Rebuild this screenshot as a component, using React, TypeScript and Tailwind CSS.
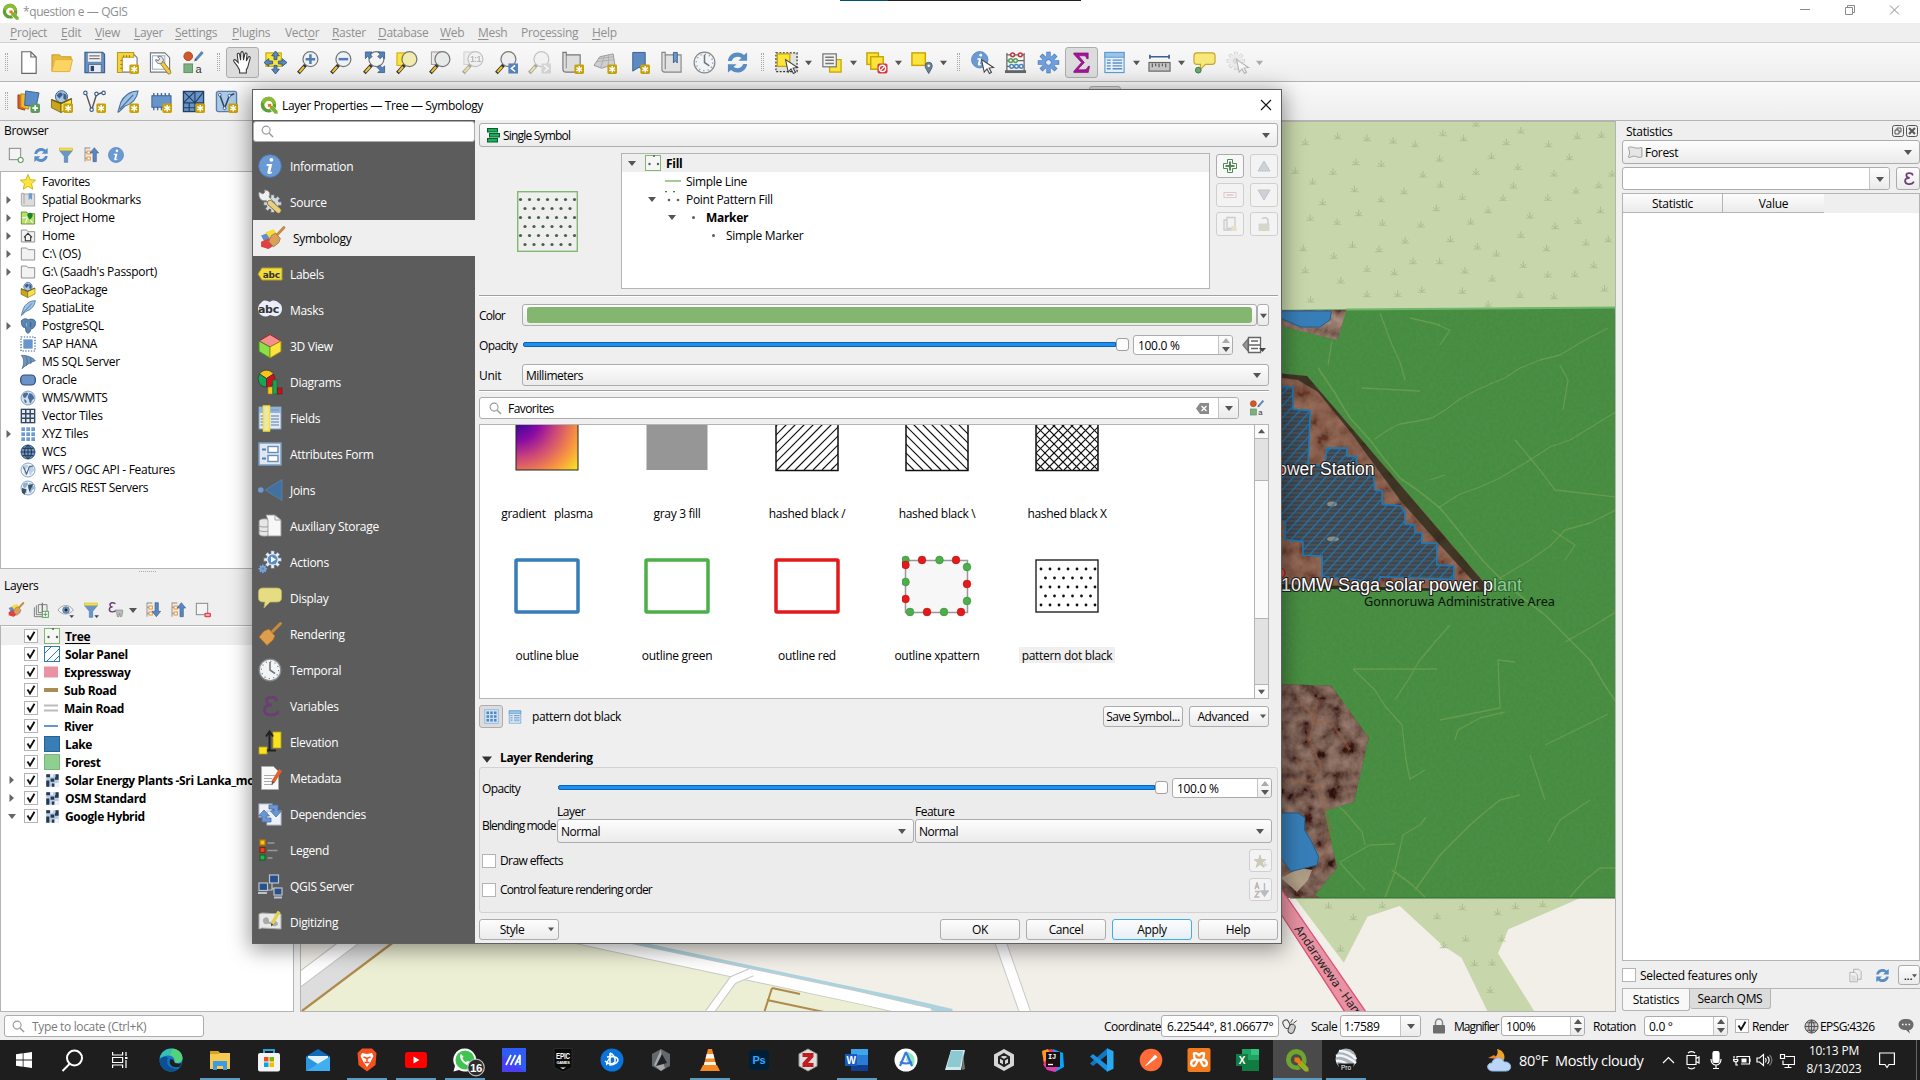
import React from "react";
import type { ReactNode } from "react";

/* ------------------------------------------------------------------ */
/* Icon drawings, all on a 24 x 24 grid                                 */
/* ------------------------------------------------------------------ */
const badge = (
  <g>
    <rect x="14" y="14" width="10" height="10" rx="1.5" fill="#c8a20a" />
    <path d="M19 15.6v6.8M16 17.3l6 3.4M22 17.3l-6 3.4" stroke="#fff" strokeWidth="1.5" />
  </g>
);
const plusBadge = (
  <g>
    <rect x="14" y="14" width="10" height="10" rx="2" fill="#5c9a5f" />
    <path d="M19 16v6M16 19h6" stroke="#fff" strokeWidth="1.8" />
  </g>
);
const mag = (fill = "#e9edf0", op = 1) => (
  <g opacity={op}>
    <path d="M1.500 23L9 14.500" stroke="#333" strokeWidth="3.800" />
    <path d="M2.500 22L7.300 16.500" stroke="#f2c230" strokeWidth="2.200" />
    <circle cx="14" cy="8.500" r="7.800" fill={fill} stroke="#777" strokeWidth="1.300" />
  </g>
);
const page = <path d="M5 .8h9.500l5.500 5.500v17H5z M14.500.8v5.500H20" fill="#fff" stroke="#666" strokeWidth="1.200" />;
const refresh = (
  <g fill="#5a8dc4">
    <path d="M2 10.5C2.5 5 7 1.5 12 1.5c3 0 5 1 6.7 2.6L22 1.5v8.8h-9l3.2-3C13 5 7.500 6 6 10.500z" />
    <path d="M22 13.500C21.500 19 17 22.500 12 22.500c-3 0-5-1-6.700-2.600L2 22.500v-8.800h9l-3.200 3c3.200 2.300 8.700 1.300 10.200-3.200z" />
  </g>
);
const brush = (
  <g>
    <path d="M1 9l11-4 6 11-10 6z" fill="#5b8fd0" />
    <path d="M5 6l8-3 4 5-6 6z" fill="#f6dc3c" />
    <path d="M1 15l7-3 6 6-6 4-7-2z" fill="#e04040" />
    <path d="M16 9L23 1.500" stroke="#c48a45" strokeWidth="2.800" strokeLinecap="round" />
    <path d="M11 9l4-2 4.500 5-1.500 4-5 4-4.500-5z" fill="#d9a05c" stroke="#a87335" strokeWidth=".8" />
  </g>
);
const funnel = (
  <g>
    <path d="M2 5h20l-7.500 9v9h-5v-9z" fill="#6a95c9" stroke="#4c7bb0" />
    <rect x="2" y="1.500" width="20" height="4" fill="#f3df4a" stroke="#c9b030" strokeWidth=".7" />
  </g>
);
const globe = (land: string, water = "#cfe0f0") => (
  <g>
    <circle cx="12" cy="12" r="10.500" fill={water} stroke="#6c8fb5" strokeWidth="1.200" />
    <path d="M4 7c3-4 7-4 8-2s-2 4-3 6-3 1-4 0zM14 5c4 0 6 3 7 6s-3 3-4 7-3 1-3-2-3-3-2-6 1-4 2-5zM6 14c2 0 4 2 4 4s-2 2-3 0z" fill={land} />
  </g>
);
const info = (
  <g>
    <circle cx="12" cy="12" r="11.300" fill="#6a9ad4" stroke="#4e7db8" />
    <circle cx="13.400" cy="5.800" r="1.900" fill="#fff" />
    <path d="M8.800 10h5.400l-2 8.200 2-.7-.5 1.800c-2.600 1.300-4.900.8-4.200-1.800l1.300-5.500-2.300-.3z" fill="#fff" />
  </g>
);
const gear = (fill: string, stroke: string, inner = "#f4f4f4") => (
  <g>
    <path d="M12 .8v22.400M.8 12h22.400M4.200 4.200l15.600 15.600M19.800 4.200L4.200 19.800" stroke={stroke} strokeWidth="4.500" />
    <path d="M12 1.600v20.800M1.600 12h20.800M4.700 4.700l14.600 14.600M19.300 4.700L4.700 19.300" stroke={fill} strokeWidth="3" />
    <circle cx="12" cy="12" r="7.500" fill={fill} />
    <circle cx="12" cy="12" r="3" fill={inner} stroke={stroke} />
  </g>
);
const tableIcon = (
  <g>
    <rect x="2" y="1.500" width="20" height="21" fill="#e7f0fa" stroke="#5b9bd0" strokeWidth="1.200" />
    <rect x="2" y="1.500" width="20" height="5" fill="#9cc3e6" stroke="#5b9bd0" />
    <path d="M4 9.500h4M4 12.500h4M4 15.500h4M4 18.500h4M10 9.500h10M10 12.500h10M10 15.500h10M10 18.500h10" stroke="#5b8fc4" strokeWidth="1.400" />
  </g>
);
const clock = (
  <g>
    <circle cx="12" cy="12" r="10.800" fill="#f3f4f6" stroke="#888" strokeWidth="1.300" />
    <circle cx="12" cy="12" r="8.600" fill="none" stroke="#5d87b8" strokeWidth="1.200" strokeDasharray="1.200 3.300" />
    <path d="M12 4v8l5 3.500" fill="none" stroke="#777" strokeWidth="1.600" />
  </g>
);
const feather = (
  <path d="M2 23L5 13C8 6 15 1 23 1 22 8 18 14 9 17L3 23z M4 20L18 5" fill="#9cc3e8" stroke="#4a6f96" strokeWidth="1.200" />
);
const box = (
  <g>
    <path d="M1.500 10l10 4v9.500l-10-5z" fill="#c9a51a" stroke="#6a5a1a" strokeWidth=".8" />
    <path d="M11.500 14l11-5v9l-11 5.500z" fill="#f7e04a" stroke="#6a5a1a" strokeWidth=".8" />
    <circle cx="12" cy="7" r="6.300" fill="#a9c6e4" stroke="#3d5c80" />
    <path d="M7 6c2-4 5-4 6-2s-2 3-3 5zM14 3c3 1 4 3 3 6s-4 0-3-2z" fill="#3f5f88" />
    <path d="M1.500 10l10 4 11-5" fill="none" stroke="#6a5a1a" strokeWidth="1.400" />
  </g>
);
const folder = <path d="M2 3h8l2 2.500h10V21H2z" fill="#f2f2f2" stroke="#8a8a8a" strokeWidth="1.400" />;
const selArrow = <path d="M11 9l2.800 13 2.900-3.200 2.500 4.700 2.200-1.200-2.500-4.500 4.600-.6z" fill="#fff" stroke="#444" strokeWidth="1.100" />;
const expandTree = (up: boolean) => (
  <g>
    <path d="M3 1v21M3 8h5M3 17h5" stroke="#888" strokeWidth="1.300" fill="none" />
    <path d="M3 1.500h8" stroke="#888" strokeWidth="1.500" />
    <rect x="6" y="6" width="5" height="4.500" fill="#fff" stroke="#f29030" strokeWidth="1.500" />
    <rect x="6" y="15" width="5" height="4.500" fill="#fff" stroke="#f29030" strokeWidth="1.500" />
    <path d={up ? "M17 1l6.500 8h-3.500v13h-5V9h-4.500z" : "M17 22l6.500-8h-3.500V1h-5v13h-4.500z"} fill="#5a87bd" stroke="#3e6494" />
  </g>
);
const styleIcon = (
  <g>
    <circle cx="6.500" cy="5.500" r="4.500" fill="#d0582c" stroke="#a84420" />
    <path d="M14 9.500l7.500-8.500" stroke="#5b87b9" strokeWidth="3" />
    <path d="M12.500 11l1.500-3 1.500 1.500z" fill="#444" />
    <rect x="2" y="13.500" width="9" height="9" fill="#7cb083" stroke="#5c9163" />
    <text x="14" y="22.500" fontSize="11.500" fill="#333" fontFamily="Liberation Sans, sans-serif">a</text>
  </g>
);
const rasterChecker = (
  <g>
    <rect x="2" y="2" width="20" height="20" fill="#b8cce6" />
    <path d="M2 2h6v5H2zM17 2h5v5h-5zM9 9h6v5H9zM2 12h5v10H2zM16 7h6v4h-6zM11 17h4v5h-4z" fill="#27394f" />
    <path d="M16 16h6v6h-6zM9 2h4v4H9z" fill="#eef3fa" />
  </g>
);
const epsilon = (c: string) => (
  <path d="M18.500 6c-1-3.500-10-4-10 .5 0 3 2.500 4.500 5.500 4.500-5 0-7.500 2-7.500 5 0 6 10.500 6.500 13.500 2" fill="none" stroke={c} strokeWidth="2.800" strokeLinecap="round" />
);

const ICONS: Record<string, ReactNode> = {
  new: page,
  open: (
    <g>
      <path d="M2 21V4h8l2 2h10v4" fill="#e9b93c" stroke="#c99a28" />
      <path d="M2 21.500L5 9h18.500l-3 12.500z" fill="#fcd462" stroke="#e0b040" />
    </g>
  ),
  save: (
    <g>
      <path d="M2 1.500h18.500L22.500 3.500v19H2z" fill="#6290c8" stroke="#3c618f" strokeWidth="1.200" />
      <rect x="5" y="2" width="14" height="9.500" fill="#f4f4f4" stroke="#888" strokeWidth=".6" />
      <path d="M6.500 5h11M6.500 8h11" stroke="#777" strokeWidth="1.300" />
      <rect x="6" y="14" width="13" height="8.500" fill="#e8ecf2" stroke="#47648c" strokeWidth=".8" />
      <rect x="8" y="15.500" width="3.500" height="5.500" fill="#2d4468" />
    </g>
  ),
  newLayout: (
    <g>
      <path d="M6 2h11l5 5v15H6z" fill="#fff" stroke="#777" strokeWidth="1.200" />
      <path d="M1.500 1.500h17v5h-12v16h-5z" fill="#f5d442" stroke="#b99a20" strokeWidth="1.100" />
      <path d="M8 4.500v2M11 4.500v2M14 4.500v2M4.500 10h2M4.500 14h2M4.500 18h2" stroke="#8a7010" />
      {badge}
    </g>
  ),
  layoutMgr: (
    <g>
      <path d="M1.500 2h15l5 5v15h-20z" fill="#fff" stroke="#777" strokeWidth="1.200" />
      <rect x="3.500" y="5" width="13" height="14" fill="none" stroke="#8aa9c9" />
      <path d="M14 13L21 22" stroke="#8a6f20" strokeWidth="4.600" strokeLinecap="round" />
      <path d="M14 13L21 22" stroke="#f0c948" strokeWidth="3.200" strokeLinecap="round" />
      <path d="M9 6c3-1.500 6 .5 6 4l-2 3c-3 1-6-1-6-4l3 1 1-2z" fill="#e8e8e8" stroke="#666" />
    </g>
  ),
  style: styleIcon,
  pan: (
    <path
      d="M6.500 15.500L3 11c-1-2 1-2.500 2-1.500L7.500 12 6.500 4c0-2 2-2 2.500-.5l1 6 .3-7.500c.2-1.800 2.400-1.800 2.500 0l.2 7.500 1.500-6.500c.5-1.500 2.500-1 2.200.5L16 10.500l2-4c.8-1.300 2.500-.5 2 1L18.500 13c-.5 3-1 5-2.500 6.500V23H9v-3z"
      fill="#fff"
      stroke="#333"
      strokeWidth="1.100"
    />
  ),
  panSel: (
    <g>
      <rect x="2" y="2" width="16" height="14" fill="#fbe53c" stroke="#c9a500" strokeWidth="1.200" />
      <path
        d="M12 0l4 5h-2.500v4h-3V5H8zM12 24l4-5h-2.500v-4h-3v4H8zM0 12l5-4v2.500h4v3H5V16zM24 12l-5-4v2.500h-4v3h4V16z"
        fill="#5b87bd"
        stroke="#2f5585"
        strokeWidth=".9"
      />
    </g>
  ),
  zoomIn: (
    <g>
      {mag("#eef2f5")}
      <path d="M14 3.500v10M9 8.500h10" stroke="#4f7db3" strokeWidth="2.600" />
    </g>
  ),
  zoomOut: (
    <g>
      {mag("#eef2f5")}
      <path d="M9 8.500h10" stroke="#4f7db3" strokeWidth="2.600" />
    </g>
  ),
  zoomFull: (
    <g>
      {mag("#f3f3f3")}
      <path
        d="M2.500 1h7l-2.300 2.300 2.300 2.400-2.300 2.300-2.400-2.300L2.500 8zM22.500 1v7l-2.300-2.300-2.400 2.300-2.300-2.300 2.400-2.400L15.500 1zM22.500 22.500h-7l2.300-2.300-3-3 2.500-2.500 3 3 2.200-2.200z"
        fill="#5583ba"
        stroke="#2f5585"
        strokeWidth=".8"
      />
    </g>
  ),
  zoomSel: (
    <g>
      <rect x="1" y="2" width="12" height="13" fill="#fbe53c" stroke="#c9a500" />
      {mag("#f1ebb0")}
    </g>
  ),
  zoomLayer: (
    <g>
      <rect x="2.500" y="1" width="11" height="13" fill="#e9e9e9" stroke="#999" />
      {mag("#e6ebea")}
    </g>
  ),
  zoomNative: (
    <g opacity=".4">
      <rect x="2" y="1" width="11" height="13" fill="#e3e3e3" stroke="#999" />
      {mag("#eee")}
      <text x="8.500" y="12" fontSize="8.500" fontWeight="700" fill="#555" fontFamily="Liberation Sans, sans-serif">1:1</text>
    </g>
  ),
  zoomLast: (
    <g>
      {mag("#eee")}
      <rect x="14" y="13" width="10" height="10.500" fill="#5583ba" />
      <path d="M21 15l-4 3.200 4 3.200" stroke="#fff" strokeWidth="1.600" fill="none" />
    </g>
  ),
  zoomNext: (
    <g opacity=".4">
      {mag("#eee")}
      <rect x="14" y="13" width="10" height="10.500" fill="#aaa" />
      <path d="M17 15l4 3.200-4 3.200" stroke="#fff" strokeWidth="1.600" fill="none" />
    </g>
  ),
  mapView: (
    <g>
      <path d="M2 1.500h3.500v2.500H20v18H5.500C3.500 22 2 20.500 2 19z" fill="#dedede" stroke="#777" strokeWidth="1.200" />
      <path d="M5.500 4v14" stroke="#888" />
      {badge}
    </g>
  ),
  map3d: (
    <g>
      <path d="M0 15L6 6l14-3 2 13H14l-6 2z" fill="#cfcfcf" stroke="#999" />
      <path d="M3 11l18-2M5 8l15-2M11 5l-4 12M15 4v13" stroke="#aaa" strokeWidth=".9" />
      {badge}
    </g>
  ),
  bookmark: (
    <g>
      <path d="M6 1.500h13V21l-6.500-4L6 21z" fill="#5d8bc1" stroke="#3a608f" />
      {badge}
    </g>
  ),
  bookmarks: (
    <g>
      <path d="M2 1.500h3.500V4H22v18H5c-2 0-3-1-3-3z" fill="#e2e2e2" stroke="#888" strokeWidth="1.200" />
      <path d="M5.500 4v15" stroke="#888" strokeWidth="1.200" />
      <path d="M14 1.500h4v11l-2-2.500-2 2.500z" fill="#6d99cf" stroke="#3a608f" />
    </g>
  ),
  clock,
  refresh,
  select: (
    <g>
      <rect x="1" y="2" width="22" height="19.500" fill="#e2e2e2" stroke="#333" strokeWidth="1.300" strokeDasharray="2 1.600" />
      <rect x="2.500" y="3" width="13" height="13" fill="#fbe53c" stroke="#c9a500" strokeWidth="1.300" />
      {selArrow}
    </g>
  ),
  selForm: (
    <g>
      <rect x="10" y="9" width="12" height="13" fill="#fbe53c" stroke="#c9a500" strokeWidth="1.300" />
      <rect x="3" y="3" width="14" height="13.500" fill="#f2f2f2" stroke="#777" strokeWidth="1.300" />
      <path d="M5.500 6.500h9M5.500 9.700h9M5.500 13h9" stroke="#777" strokeWidth="1.600" />
    </g>
  ),
  deselect: (
    <g>
      <rect x="2" y="2" width="12" height="12" fill="#fbe53c" stroke="#c9a500" strokeWidth="1.500" />
      <rect x="6" y="6" width="13" height="13" fill="#fbe53c" stroke="#c9a500" strokeWidth="1.500" />
      <rect x="13" y="13" width="10.500" height="10.500" rx="2" fill="#d9353b" />
      <circle cx="18.200" cy="18.200" r="3.300" fill="none" stroke="#fff" strokeWidth="1.400" />
      <path d="M16 20.500l4.500-4.500" stroke="#fff" strokeWidth="1.400" />
    </g>
  ),
  selLoc: (
    <g>
      <rect x="2" y="2" width="14" height="13" fill="#fbe53c" stroke="#c9a500" strokeWidth="1.500" />
      <path d="M19.500 23.500c-2-4-3.700-5.500-3.700-8a3.700 3.700 0 017.400 0c0 2.500-1.700 4-3.700 8z" fill="#6d8296" stroke="#4d6276" />
      <circle cx="19.500" cy="15.500" r="1.300" fill="#fff" />
    </g>
  ),
  identify: (
    <g>
      <g transform="scale(.76)">{info}</g>
      {selArrow}
    </g>
  ),
  abacus: (
    <g>
      <path d="M3 2v19M21 2v19M3 4h18M3 10h18M3 16h18" stroke="#666" strokeWidth="1.300" />
      <path d="M1 21.500h22" stroke="#666" strokeWidth="3" />
      <g fill="#fff" strokeWidth="1.600">
        <circle cx="9" cy="4" r="2" stroke="#c8343c" />
        <circle cx="17" cy="4" r="2" stroke="#c8343c" />
        <circle cx="7" cy="10" r="2" stroke="#56a05c" />
        <circle cx="12" cy="10" r="2" stroke="#56a05c" />
        <circle cx="8" cy="16" r="2" stroke="#4e84bb" />
        <circle cx="13" cy="16" r="2" stroke="#4e84bb" />
        <circle cx="18" cy="16" r="2" stroke="#4e84bb" />
      </g>
    </g>
  ),
  gearBlue: gear("#6f9fdb", "#4b79b4", "#e8eef6"),
  sigma: <path d="M4 2h15v6h-1.500c-.5-2.500-1.500-3-4-3H9l6 7-7 7.500h6.500c2.500 0 3.500-1 4.500-3.500h1.500L19 22.500H4v-1.500l8-9-8-8.500z" fill="#a8109e" stroke="#6f0a68" strokeWidth=".6" />,
  table: tableIcon,
  measure: (
    <g>
      <path d="M2 4v4M22 4v4M2 6h20" stroke="#3c608f" strokeWidth="1.800" />
      <rect x="1" y="12" width="22" height="9" fill="#c6c6c6" stroke="#666" strokeWidth="1.200" />
      <path d="M4.500 13v4M8 13v3M11.500 13v4M15 13v3M18.500 13v4" stroke="#555" strokeWidth="1.200" />
    </g>
  ),
  tips: (
    <g>
      <path d="M4 2h16c2 0 3 1 3 3v6c0 2-1 3-3 3h-7l-6 6 1-6H4c-2 0-3-1-3-3V5c0-2 1-3 3-3z" fill="#f8e87a" stroke="#c0a62c" strokeWidth="1.200" />
      <circle cx="5.500" cy="20" r="3" fill="#6aa86e" stroke="#47784a" />
    </g>
  ),
  runAction: (
    <g opacity=".35">
      <g transform="scale(.85)">{gear("#ddd", "#888", "#bbb")}</g>
      {selArrow}
    </g>
  ),
  dataSource: (
    <g>
      <path d="M1 5l9 2-2 14-7-2z" fill="#d9582a" stroke="#a84420" />
      <path d="M4 4l11 1-3 15-8-2z" fill="#f2b92c" stroke="#b58a20" />
      <path d="M9 1l14 2-3 14-12-1z" fill="#5b8dc8" stroke="#3a608f" />
      {plusBadge}
    </g>
  ),
  gpkgNew: (
    <g>
      {box}
      {badge}
    </g>
  ),
  shpNew: (
    <g>
      <path d="M3 3l6 18 5-16 8-3" fill="none" stroke="#555" strokeWidth="1.500" />
      <g fill="#fff" stroke="#3f5f88" strokeWidth="1.200">
        <circle cx="2.500" cy="3" r="1.800" />
        <circle cx="9" cy="20.500" r="1.800" />
        <circle cx="14" cy="4" r="1.800" />
        <circle cx="21.500" cy="3" r="1.800" />
      </g>
      {badge}
    </g>
  ),
  spatiaNew: (
    <g>
      {feather}
      {badge}
    </g>
  ),
  memNew: (
    <g>
      <path d="M5 3v18M9 3v18M13 3v18M17 3v18M21 3v18" stroke="#4a6f96" strokeWidth="1.500" />
      <rect x="3" y="6" width="20" height="12" fill="#6795cb" stroke="#3a608f" />
      {badge}
    </g>
  ),
  meshNew: (
    <g>
      <rect x="1.500" y="1.500" width="21" height="21" fill="#6795cb" stroke="#253f60" strokeWidth="1.400" />
      <path d="M1.500 13.500l12-12M1.500 1.500l12 12M22.500 2l-9 11.500M1.500 13.500h21M13.500 1.500v21M7.500 13.500v9M1.500 18.500h12" stroke="#253f60" strokeWidth="1.200" />
      {badge}
    </g>
  ),
  gpxNew: (
    <g>
      <rect x="1.500" y="1.500" width="21" height="21" rx="2" fill="#a9c8ea" stroke="#5c7ea6" strokeWidth="1.400" />
      <path d="M5 5l5 14 5-13 5-2" fill="none" stroke="#345" strokeWidth="1.600" />
      <g fill="#fff" stroke="#3f5f88">
        <circle cx="5" cy="5" r="1.500" />
        <circle cx="10" cy="19" r="1.500" />
        <circle cx="15" cy="6" r="1.500" />
      </g>
      {badge}
    </g>
  ),
  addGroupBox: (
    <g>
      <rect x="2" y="2" width="17" height="17" fill="#f4f4f4" stroke="#8a8a8a" strokeWidth="1.500" />
      <circle cx="19" cy="19.500" r="3.800" fill="#fff" stroke="#5c9a5f" strokeWidth="1.600" />
    </g>
  ),
  funnel,
  collapse: expandTree(true),
  expand: expandTree(false),
  info,
  starFav: <path d="M12 .8l3.300 7.700 8.200.7-6.200 5.400 1.900 8.200L12 18.400l-7.200 4.400 1.900-8.200L.5 9.200l8.200-.7z" fill="#fbe53c" stroke="#c9a500" strokeWidth="1.200" />,
  spBook: (
    <g>
      <path d="M2 2h4v1h16v18H5c-2 0-3-1-3-2z" fill="#dcdcdc" stroke="#999" strokeWidth="1.200" />
      <path d="M6 3v15" stroke="#999" strokeWidth="1.200" />
      <path d="M13 2h5v10l-2.500-2.500L13 12z" fill="#6d99cf" />
    </g>
  ),
  projHome: (
    <g>
      <path d="M2 3h8l2 2.500h10V21H2z" fill="#b9e06a" stroke="#6a8a3a" strokeWidth="1.400" />
      <path d="M3 12l10-2 6 10M8 20l3-8" stroke="#fff" strokeWidth="1.500" fill="none" />
      <path d="M15 15c-3-4-4-5-4-7a4 4 0 018 0c0 2-1 3-4 7z" fill="#17832c" />
    </g>
  ),
  home: (
    <g>
      {folder}
      <path d="M6 14l6-6 6 6M8 13v6h8v-6" fill="none" stroke="#333" strokeWidth="1.600" />
    </g>
  ),
  folder,
  gpkg: box,
  feather,
  elephant: <path d="M2 4c4-4 9-3 10-1 3-2 9-2 11 2 1 5-1 10-5 11l-2 1c-1 7-6 7-7 3l-1-6c-4 1-6-3-6-10z M9 5c-2 4-1 7 1 9M16 6v8" fill="#5b87b5" stroke="#34567e" strokeWidth="1.200" />,
  hana: (
    <g>
      <rect x="1.500" y="1.500" width="21" height="21" fill="none" stroke="#345a8a" strokeWidth="1.800" strokeDasharray="2 2.200" />
      <rect x="5" y="5" width="14" height="14" fill="#6795cb" />
    </g>
  ),
  mssql: <path d="M2 2c9 0 17 3 21 8-6 2-14 6-20 12 3-6 4-14-1-20zM9 4c3 5 2 10 0 14M15 5c2 4 2 7 1 10" fill="#6f94bd" stroke="#44668f" strokeWidth="1.100" />,
  oracle: <rect x="1" y="4.500" width="22" height="15" rx="6" fill="#6a93c8" stroke="#2e4d75" strokeWidth="1.800" />,
  wms: globe("#4b6e99"),
  vtiles: (
    <g>
      <rect x="2" y="2" width="20" height="20" fill="#e5ebf4" stroke="#33475f" strokeWidth="2" />
      <path d="M2 8.600h20M2 15.300h20M8.600 2v20M15.300 2v20" stroke="#33475f" strokeWidth="2.200" />
    </g>
  ),
  xyz: (
    <g fill="#6d9bd3">
      {[2, 9.5, 17].map((x) => [2, 9.5, 17].map((y) => <rect key={`${x}-${y}`} x={x} y={y} width="5.500" height="5.500" />))}
    </g>
  ),
  wcs: (
    <g>
      <circle cx="12" cy="12" r="10.500" fill="#6e97c8" stroke="#2c4a70" strokeWidth="1.400" />
      <path d="M1.500 12h21M3.500 6.500h17M3.500 17.500h17M12 1.500v21M12 1.500c-7 5-7 16 0 21M12 1.500c7 5 7 16 0 21" fill="none" stroke="#23374f" strokeWidth="1.500" />
    </g>
  ),
  wfs: (
    <g>
      {globe("#b9cfe8", "#f2f6fb")}
      <path d="M5 7l5 11 4-11 6-1" fill="none" stroke="#4a6688" strokeWidth="1.700" />
    </g>
  ),
  arcgis: (
    <g>
      {globe("#8fb0d8", "#e7eff9")}
      <path d="M3 12l7 2-3 8-4-3zM12 8l8-2-6 12z" fill="#3c5066" />
    </g>
  ),
  addGroup: (
    <g>
      <path d="M2 8v14h12M5 5v14h13" fill="none" stroke="#777" strokeWidth="1.400" />
      <path d="M8 4h13v12H8z" fill="#eee" stroke="#777" strokeWidth="1.400" />
      <path d="M14 1v14" stroke="#777" strokeWidth="2" />
      <rect x="14" y="14" width="9" height="9" fill="#fff" stroke="#5c9a5f" strokeWidth="1.500" />
      <path d="M18.500 15.500v6M15.500 18.500h6" stroke="#5c9a5f" strokeWidth="1.500" />
    </g>
  ),
  eye: (
    <g>
      <path d="M0 12C6 3 17 3 23 12 17 20 6 20 0 12z" fill="#f4f4f4" stroke="#999" strokeWidth="1.300" />
      <circle cx="12" cy="12" r="5" fill="#6f98c8" stroke="#44668f" />
      <circle cx="12" cy="12" r="2.200" fill="#223" />
      <path d="M17 20h7l-3.500 4z" fill="#444" />
    </g>
  ),
  funnelArr: (
    <g>
      {funnel}
      <path d="M17 20h7l-3.500 4z" fill="#444" />
    </g>
  ),
  exprFilter: (
    <g>
      <path d="M11 3C9-.5 2.500 1 3 4.500c.3 2 2 2.800 4 2.800-3.500 0-5 1.500-5 4 0 4.500 8 4.500 10 1" fill="none" stroke="#6b3f73" strokeWidth="2.200" />
      <path d="M11 12h11v4l-1.500 6h-2l-1-5-1 5H14l-1-6z" fill="#bbb" stroke="#888" />
    </g>
  ),
  removeBox: (
    <g>
      <rect x="2" y="2" width="17" height="17" fill="#f4f4f4" stroke="#8a8a8a" strokeWidth="1.500" />
      <rect x="14" y="16" width="10" height="7" rx="2" fill="#e5484d" />
      <path d="M16 19.500h6" stroke="#fff" strokeWidth="1.600" />
    </g>
  ),
  brush,
  wrench: (
    <g>
      <g transform="translate(5 4) scale(.8)">{gear("#d5dbe2", "#8a939c", "#6f9bd0")}</g>
      <path d="M1 2l4 2 2-2-1-2c5 0 7 3 5 7l4 4-3 3-4-3.500C3 12 0 7 1 2z" fill="#eee" stroke="#888" strokeWidth=".8" />
      <path d="M12 13l8.500 7.500" stroke="#7d6a30" strokeWidth="6" strokeLinecap="round" />
      <path d="M12 13l8.500 7.500" stroke="#e5cf83" strokeWidth="4.600" strokeLinecap="round" />
    </g>
  ),
  labels: (
    <g>
      <path d="M0 12l4-6h20v12H4z" fill="#f1dd3c" stroke="#b79e20" />
      <text x="4.800" y="15.500" fontSize="9" fontWeight="700" fill="#333" fontFamily="DejaVu Sans, sans-serif">abc</text>
    </g>
  ),
  masks: (
    <g>
      <path d="M3 5c3-4 6-2 9-1 3-3 7-1 9 1 4 2 4 9 0 12-3 2-6 1-9 0-3 2-6 2-9 0-4-2-4-10 0-12z" fill="#e9eef8" />
      <text x="0" y="15" fontSize="11" fontWeight="700" fill="#333" fontFamily="DejaVu Sans, sans-serif">abc</text>
    </g>
  ),
  view3d: (
    <g>
      <path d="M12 .5l11 6.500-11 6L1 7z" fill="#f58f8f" stroke="#a52020" />
      <path d="M1 7l11 6v11L1 17.500z" fill="#8be04a" stroke="#4a8a20" />
      <path d="M23 7l-11 6v11l11-6.500z" fill="#fbe53c" stroke="#a89010" />
    </g>
  ),
  diagrams: (
    <g>
      <path d="M8.500 8.500L1.500 4a8.300 8.300 0 0114 0z" fill="#fbc515" stroke="#333" strokeWidth=".7" />
      <path d="M8.500 8.500L1.500 4A8.300 8.300 0 008.500 17z" fill="#17a556" stroke="#333" strokeWidth=".7" />
      <path d="M8.500 8.500l7-4.500a8.300 8.300 0 01-7 13z" fill="#c8131a" stroke="#333" strokeWidth=".7" />
      <rect x="10" y="17" width="4.500" height="7" fill="#fbc515" stroke="#a07a10" strokeWidth=".6" />
      <rect x="15" y="10" width="4" height="14" fill="#17a556" stroke="#0b6a35" strokeWidth=".6" />
      <rect x="19.500" y="18" width="4.500" height="6" fill="#c8131a" stroke="#7a0c10" strokeWidth=".6" />
    </g>
  ),
  fields: (
    <g>
      <rect x="1" y="1" width="22" height="22" fill="#dfeaf6" stroke="#7c9cc0" />
      <rect x="1" y="1" width="22" height="6" fill="#8fb3da" />
      <path d="M13 4h8M13 10h8M13 13h8M13 16h8M13 19h8M2.500 10h3M2.500 13h3M2.500 16h3M2.500 19h3" stroke="#8a9fb8" strokeWidth="1.300" />
      <rect x="5.500" y="0" width="6" height="25" fill="#efe6ae" stroke="#f0e040" strokeWidth="1.500" />
    </g>
  ),
  form: (
    <g>
      <rect x="1" y="1" width="22" height="22" fill="#dfe8f2" stroke="#7c9cc0" strokeWidth="1.500" />
      <path d="M4 7.500h4M4 16.500h4" stroke="#5b7ea8" strokeWidth="1.800" />
      <rect x="10" y="4.500" width="10" height="6" fill="#fff" stroke="#6b8db5" strokeWidth="1.400" />
      <rect x="10" y="13.500" width="10" height="6" fill="#fff" stroke="#6b8db5" strokeWidth="1.400" />
    </g>
  ),
  joins: (
    <g>
      <circle cx="2.800" cy="12" r="2.800" fill="#6b9ad6" />
      <path d="M7 12L24 1.500v21z" fill="#42719f" stroke="#5b8cc0" strokeWidth=".6" />
    </g>
  ),
  storage: (
    <g>
      <path d="M1 7c0-3 11-3 11 0v13c0 3-11 3-11 0z" fill="#e4e6e8" stroke="#888" strokeWidth=".9" />
      <path d="M1 11.500c0 2 11 2 11 0M1 16c0 2 11 2 11 0" fill="none" stroke="#999" />
      <path d="M8 1h9l6 5v16H10V6z" fill="#f7f7f7" stroke="#999" strokeWidth=".9" />
      <path d="M17 1v5h6" fill="none" stroke="#999" strokeWidth=".9" />
    </g>
  ),
  actions: (
    <g>
      <g transform="translate(5 0) scale(.8)">{gear("#eef0f2", "#8fa3b8", "#5b8dc8")}</g>
      <circle cx="14.600" cy="9.600" r="5" fill="#5b8dc8" />
      <g transform="translate(0 14) scale(.4)">{gear("#7fa6d4", "#5b82b0", "#5b8dc8")}</g>
      <path d="M13 6.500v6l5-3z" fill="#fff" />
    </g>
  ),
  display: <path d="M5 2h14c3 0 4.500 1.500 4.500 4v6c0 2.500-1.500 4-4.500 4h-7l-6 6 1-6H5c-3 0-4.500-1.500-4.500-4V6C.5 3.500 2 2 5 2z" fill="#e6dc84" stroke="#bdb35a" strokeWidth=".8" />,
  rendering: (
    <g>
      <path d="M14 10L22.500 1.500" stroke="#c98a3c" strokeWidth="3" strokeLinecap="round" />
      <path d="M6 9l5-2 6 7-2 4-6 5.500L1 15z" fill="#dd9f4e" stroke="#a06a24" strokeWidth=".8" />
    </g>
  ),
  variables: epsilon("#6b3f73"),
  elevation: (
    <g>
      <rect x="15" y="2" width="8" height="16" fill="#f7e120" stroke="#b7a010" strokeWidth=".8" />
      <rect x="1" y="17" width="8" height="7" fill="#f7e120" stroke="#b7a010" strokeWidth=".8" />
      <path d="M11.500 21V2M8 6.500L11.500 1.500 15 6.500M9 20.500h9" fill="none" stroke="#222" strokeWidth="2" />
    </g>
  ),
  metadata: (
    <g>
      <path d="M3.500.5h12l5 5v18h-17z" fill="#fafafa" stroke="#aaa" />
      <path d="M6 9.500h11M6 12.500h8M6 15.500h10M6 18.500h9" stroke="#aaa" strokeWidth="1.200" />
      <path d="M15 16L22.500 4" stroke="#e2622c" strokeWidth="3.500" />
      <path d="M13.500 19l.5-4 2.500 1.500z" fill="#555" />
    </g>
  ),
  dependencies: (
    <g>
      <rect x="1" y="2" width="13" height="13" fill="#eef2f8" stroke="#b5bfd0" />
      <rect x="9" y="9" width="14" height="14" fill="#eef2f8" stroke="#b5bfd0" />
      <path d="M11 3h9v6h3.500l-5.500 6-5.500-6H16V7h-5zM13 20H4v-6H.5L6 8l5.500 6H8v2h5z" fill="#6b96d4" stroke="#4670ae" strokeWidth=".8" />
    </g>
  ),
  legend: (
    <g>
      <rect x="2" y="2" width="5" height="5" fill="#fbc515" stroke="#b57a00" strokeWidth="1.200" />
      <rect x="2" y="9.500" width="5" height="5" fill="#e8451c" stroke="#8a2408" strokeWidth="1.200" />
      <rect x="2" y="17" width="5" height="5" fill="#2ab04a" stroke="#0c6a25" strokeWidth="1.200" />
      <path d="M9.500 5h7M9.500 12.500h10M9.500 20h5" stroke="#999" strokeWidth="1.500" />
    </g>
  ),
  server: (
    <g stroke="#b9c3cc" strokeWidth="1.200">
      <path d="M14 9v7H8M14 14l5 3" fill="none" />
      <rect x="11.500" y="1" width="9" height="8" fill="#28508c" />
      <rect x="1" y="9" width="8.500" height="7.500" fill="#28508c" />
      <rect x="16" y="14" width="8" height="7" fill="#28508c" />
      <path d="M0 19h9M16 23.500h8" strokeWidth="2" />
    </g>
  ),
  digitizing: (
    <g>
      <path d="M1 4l3-1 19 1v15l-19-1-3 1z" fill="#e8e8e8" stroke="#aaa" />
      <path d="M6 8c3-2 5 0 5 3s5-2 8 1-2 5-4 4-2-3-6-2-5-4-3-6z" fill="#a9a9a9" />
      <path d="M14 14L21 1.500" stroke="#e2d14a" strokeWidth="3.400" />
      <path d="M13 16.500l0-3.500 2.500 1.500z" fill="#555" />
    </g>
  ),
  poly: <path d="M2 5c5-3 8 3 19 0v13c-5 3-9-3-15 0-2 1-4 2-4 0 3-6 1-8 0-13z" fill="#e6e6e6" stroke="#8f8f8f" strokeWidth="1.200" />,
  epsilon: epsilon("#6b3f73"),
  copy: (
    <g opacity=".7">
      <path d="M9 2h8l4 4v12H9z" fill="#eee" stroke="#888" strokeWidth="1.300" />
      <path d="M3 7h8l4 4v11H3z" fill="#f4f4f4" stroke="#888" strokeWidth="1.300" />
      <path d="M5.500 13h6M5.500 16h7M5.500 19h7" stroke="#999" />
    </g>
  ),
  tableSmall: tableIcon,
  grid: (
    <g>
      <rect x="1" y="1" width="22" height="22" fill="#c9dcf0" stroke="#8fb3d9" />
      {[4, 10, 16].map((x) => [4, 10, 16].map((y) => <rect key={`${x}-${y}`} x={x} y={y} width="4" height="4" fill="#4f88c4" />))}
    </g>
  ),
};

const Icon = ({ n, s = 24 }: { n: string; s?: number }) => (
  <svg width={s} height={s} viewBox="0 0 24 24" className="shrink-0 overflow-visible">
    {ICONS[n]}
  </svg>
);

const Logo = ({ s = 18 }: { s?: number }) => (
  <svg width={s} height={s} viewBox="0 0 24 24" className="shrink-0">
    <path d="M11.500 1a10.500 10.500 0 100 21c2 0 3-.3 4.300-1L13 17.300A5.700 5.700 0 1117 13l3.800 3.800C23.500 10 19 1 11.500 1z" fill="#5f9e33" />
    <path d="M11.500 1a10.500 10.500 0 00-10 8l5 1a5.800 5.800 0 015-3.800c3 0 5 1.500 5.700 4.800l4.500 0C20.500 4 16 1 11.500 1z" fill="#8bbb35" />
    <path d="M13 13h4l6.500 7v3.500H20L13 17z" fill="#7fb23a" />
    <path d="M10.500 10.500h4.500v4h-4.500z" fill="#ee7913" />
  </svg>
);

const Tri = ({ d = "down", c = "#555", w = 8 }: { d?: "down" | "up" | "right"; c?: string; w?: number }) => (
  <svg width={w} height={w} viewBox="0 0 8 8" className="shrink-0">
    <path d={d === "down" ? "M0 2h8L4 7z" : d === "up" ? "M0 6h8L4 1z" : "M1.500 0v8L6 4z"} fill={c} />
  </svg>
);

const Search = ({ s = 14, c = "#999" }: { s?: number; c?: string }) => (
  <svg width={s} height={s} viewBox="0 0 14 14" className="shrink-0">
    <circle cx="5.500" cy="5.500" r="4.300" fill="none" stroke={c} strokeWidth="1.200" />
    <path d="M8.800 8.800L13 13" stroke={c} strokeWidth="1.600" />
  </svg>
);

const Check = ({ on = false }: { on?: boolean }) => (
  <div className="flex h-[14px] w-[14px] shrink-0 items-center justify-center border border-[#b4b4b4] bg-white">
    {on && (
      <svg width="10" height="10" viewBox="0 0 10 10">
        <path d="M1.500 4.500L4 8.500 8.500.8" fill="none" stroke="#111" strokeWidth="1.900" />
      </svg>
    )}
  </div>
);

const field = "border border-[#acacac] rounded-[3px]";
const grad = "bg-linear-to-b from-[#fdfdfd] to-[#ebebeb]";

const Combo = ({ children, cls = "" }: { children: ReactNode; cls?: string }) => (
  <div className={`flex items-center justify-between pr-[7px] ${field} ${grad} ${cls}`}>
    <div className="flex items-center">{children}</div>
    <Tri />
  </div>
);

const Btn = ({ children, cls = "" }: { children: ReactNode; cls?: string }) => (
  <div className={`flex items-center justify-center ${field} ${grad} ${cls}`}>{children}</div>
);

const Spin = ({ v, cls = "", upOff = false }: { v: string; cls?: string; upOff?: boolean }) => (
  <div className={`flex ${field} bg-white ${cls}`}>
    <div className="flex flex-1 items-center pl-[4px]">{v}</div>
    <div className={`flex w-[14px] flex-col items-center justify-between rounded-r-[3px] border-l border-[#c4c4c4] py-[1px] ${grad}`}>
      <Tri d="up" c={upOff ? "#aaa" : "#555"} />
      <Tri />
    </div>
  </div>
);

const Slider = ({ cls = "" }: { cls?: string }) => (
  <div className={`flex items-center ${cls}`}>
    <div className="h-[5px] flex-1 rounded-l-[2px] border border-[#0a64b4] bg-[#1c8ff0]" />
    <div className="h-[13px] w-[13px] rounded-[3px] border border-[#a0a0a0] bg-[#fcfcfc]" />
  </div>
);

/* ------------------------------------------------------------------ */
/* Main window chrome                                                   */
/* ------------------------------------------------------------------ */
const TitleBar = () => (
  <div className="relative flex h-[23px] items-center bg-white pl-[2px] text-[#8f8f8f]">
    <Logo s={17} />
    <span className="ml-[4px] tracking-[-0.4px]">*question e — QGIS</span>
    <div className="absolute left-[840px] top-0 flex h-px w-[241px] bg-[#222]">
      <div className="w-[48px] bg-[#00507a]" />
    </div>
    <svg className="absolute right-[20px] top-[3px]" width="100" height="14" viewBox="0 0 100 14" fill="none" stroke="#8a8a8a">
      <path d="M0 6.500h10" />
      <path d="M45.500 4.500h7v7h-7zM47.500 4.500v-2h7v7h-2" />
      <path d="M90 2.500l9 9M99 2.500l-9 9" />
    </svg>
  </div>
);

const MENU: [string, string, string, string][] = [
  ["", "P", "roject", "w-[51px]"],
  ["", "E", "dit", "w-[34px]"],
  ["", "V", "iew", "w-[39px]"],
  ["", "L", "ayer", "w-[41px]"],
  ["", "S", "ettings", "w-[57px]"],
  ["", "P", "lugins", "w-[53px]"],
  ["Vect", "o", "r", "w-[47px]"],
  ["", "R", "aster", "w-[46px]"],
  ["", "D", "atabase", "w-[62px]"],
  ["", "W", "eb", "w-[38px]"],
  ["", "M", "esh", "w-[43px]"],
  ["Pro", "c", "essing", "w-[71px]"],
  ["", "H", "elp", "w-[40px]"],
];

const MenuBar = () => (
  <div className="flex h-[20px] items-center border-b border-[#d2d2d2] pl-[10px] text-[#8f8f8f]">
    {MENU.map(([a, u, b, w]) => (
      <div key={a + u + b} className={`shrink-0 ${w}`}>
        {a}
        <span className="underline underline-offset-2">{u}</span>
        {b}
      </div>
    ))}
  </div>
);

const Handle = ({ w = "w-[16px]" }: { w?: string }) => (
  <div className={`flex shrink-0 justify-center gap-px ${w}`}>
    <div className="h-[18px] border-l border-dotted border-[#aaa]" />
    <div className="h-[18px] border-l border-dotted border-[#aaa]" />
  </div>
);

const Tool = ({ n, on = false, menu = false, dim = false }: { n: string; on?: boolean; menu?: boolean; dim?: boolean }) => (
  <div className={`flex shrink-0 items-center ${menu ? "w-[45px]" : "w-[33px]"}`}>
    <div className={`flex h-[31px] w-[33px] shrink-0 items-center justify-center rounded-[3px] ${on ? "border border-[#adadad] bg-[#dcdcdc]" : ""}`}>
      <Icon n={n} s={23} />
    </div>
    {menu && (
      <div className="ml-[2px] flex">
        <Tri c={dim ? "#aaa" : "#555"} w={7} />
      </div>
    )}
  </div>
);

const Toolbars = () => (
  <>
    <div className="flex h-[39px] items-center border-b border-[#b4b4b4] bg-linear-to-b from-[#f9f9f9] to-[#eeeeee]">
      <Handle w="w-[12px]" />
      {["new", "open", "save", "newLayout", "layoutMgr", "style"].map((n) => (
        <Tool key={n} n={n} />
      ))}
      <Handle />
      <Tool n="pan" on />
      {["panSel", "zoomIn", "zoomOut", "zoomFull", "zoomSel", "zoomLayer", "zoomNative", "zoomLast", "zoomNext", "mapView", "map3d", "bookmark", "bookmarks", "clock", "refresh"].map((n) => (
        <Tool key={n} n={n} />
      ))}
      <Handle />
      {["select", "selForm", "deselect", "selLoc"].map((n) => (
        <Tool key={n} n={n} menu />
      ))}
      <Handle />
      <Tool n="identify" />
      <Tool n="abacus" />
      <Tool n="gearBlue" />
      <Tool n="sigma" on />
      <Tool n="table" menu />
      <Tool n="measure" menu />
      <Tool n="tips" />
      <Tool n="runAction" menu dim />
    </div>
    <div className="flex h-[39px] items-center border-b border-[#b4b4b4] bg-linear-to-b from-[#f9f9f9] to-[#eeeeee]">
      <Handle w="w-[12px]" />
      {["dataSource", "gpkgNew", "shpNew", "spatiaNew", "memNew", "meshNew", "gpxNew"].map((n) => (
        <Tool key={n} n={n} />
      ))}
      <div className="ml-[846px] h-[31px] w-[32px] rounded-[3px] border border-[#adadad] bg-[#dcdcdc]" />
    </div>
  </>
);

const BROWSER: [string, string, boolean][] = [
  ["starFav", "Favorites", false],
  ["spBook", "Spatial Bookmarks", true],
  ["projHome", "Project Home", true],
  ["home", "Home", true],
  ["folder", "C:\\ (OS)", true],
  ["folder", "G:\\ (Saadh's Passport)", true],
  ["gpkg", "GeoPackage", false],
  ["feather", "SpatiaLite", false],
  ["elephant", "PostgreSQL", true],
  ["hana", "SAP HANA", false],
  ["mssql", "MS SQL Server", false],
  ["oracle", "Oracle", false],
  ["wms", "WMS/WMTS", false],
  ["vtiles", "Vector Tiles", false],
  ["xyz", "XYZ Tiles", true],
  ["wcs", "WCS", false],
  ["wfs", "WFS / OGC API - Features", false],
  ["arcgis", "ArcGIS REST Servers", false],
];

const LayerSwatch = ({ k }: { k: string }) => (
  <svg width="16" height="16" viewBox="0 0 16 16" className="shrink-0">
    {k === "tree" && (
      <g>
        <rect x=".5" y=".5" width="15" height="15" fill="#f6f6f6" stroke="#84b870" />
        <circle cx="4.500" cy="9" r="1.200" fill="#4d6a45" />
        <circle cx="13" cy="9" r="1.200" fill="#4d6a45" />
        <circle cx="9" cy="1" r="1" fill="#4d6a45" />
      </g>
    )}
    {k === "solar" && (
      <g>
        <rect x=".5" y=".5" width="15" height="15" fill="#fff" stroke="#2c7bb6" />
        <path d="M1 7l6-6M3 15L15 3M10 15l5-5" stroke="#2c7bb6" />
      </g>
    )}
    {k === "exp" && <rect x="0" y="2.500" width="14" height="11" fill="#e892a2" />}
    {k === "sub" && <rect x="0" y="6" width="14" height="4" fill="#a78d55" />}
    {k === "main" && <path d="M0 5.500h14M0 10.500h14" stroke="#bcbcbc" strokeWidth="2" />}
    {k === "river" && <path d="M0 8h14" stroke="#6295cc" strokeWidth="2" />}
    {k === "lake" && <rect x=".5" y=".5" width="15" height="15" fill="#377eb8" stroke="#2a628f" />}
    {k === "forest" && <rect x=".5" y=".5" width="15" height="15" fill="#91cf91" stroke="#7ab57a" />}
    {k === "raster" && <g transform="translate(1 1) scale(.62)">{rasterChecker}</g>}
  </svg>
);

const LAYERS: [string, string, string][] = [
  ["tree", "Tree", ""],
  ["solar", "Solar Panel", ""],
  ["exp", "Expressway", ""],
  ["sub", "Sub Road", ""],
  ["main", "Main Road", ""],
  ["river", "River", ""],
  ["lake", "Lake", ""],
  ["forest", "Forest", ""],
  ["raster", "Solar Energy Plants -Sri Lanka_mod", "right"],
  ["raster", "OSM Standard", "right"],
  ["raster", "Google Hybrid", "down"],
];
const THIN = ["exp", "sub", "main", "river"];

const LeftDock = () => (
  <div className="flex w-[294px] shrink-0 flex-col">
    <div className="flex h-[20px] items-center pl-[4px]">Browser</div>
    <div className="flex h-[30px] items-center gap-[9px] pl-[8px] pb-[2px]">
      {["addGroupBox", "refresh", "funnel", "collapse", "info"].map((n) => (
        <Icon key={n} n={n} s={16} />
      ))}
    </div>
    <div className="h-[398px] border border-[#b4b4b4] bg-white pt-[1px]">
      {BROWSER.map(([ic, t, exp]) => (
        <div key={t} className="flex h-[18px] items-center">
          <div className="flex w-[19px] justify-center pr-[4px]">{exp && <Tri d="right" c="#666" />}</div>
          <Icon n={ic} s={16} />
          <span className="ml-[6px]">{t}</span>
        </div>
      ))}
    </div>
    <div className="mx-auto mt-[2px] h-0 w-[17px] border-t border-dotted border-[#aaa]" />
    <div className="mt-[4px] flex h-[20px] items-center pl-[4px]">Layers</div>
    <div className="flex h-[30px] items-center pl-[8px]">
      <div className="flex gap-[9px]">
        {["brush", "addGroup", "eye", "funnelArr", "exprFilter"].map((n) => (
          <Icon key={n} n={n} s={16} />
        ))}
      </div>
      <div className="ml-[5px] mr-[8px] flex">
        <Tri />
      </div>
      <div className="flex gap-[9px]">
        <Icon n="expand" s={16} />
        <Icon n="collapse" s={16} />
        <Icon n="removeBox" s={16} />
      </div>
    </div>
    <div className="h-[387px] overflow-hidden border border-[#b4b4b4] bg-white pt-px">
      {LAYERS.map(([k, t, a]) => (
        <div key={t} className={`flex h-[18px] items-center pl-[3px] font-bold tracking-[-0.37px] ${k === "tree" ? "bg-[#efefef]" : ""}`}>
          <div className="flex w-[20px] justify-center pr-[5px]">{a && <Tri d={a as "right"} c="#666" />}</div>
          <Check on />
          <div className="ml-[6px] flex">
            <LayerSwatch k={k} />
          </div>
          <span className={`whitespace-nowrap ${THIN.includes(k) ? "ml-[4px]" : "ml-[5px]"} ${k === "tree" ? "underline underline-offset-2" : ""}`}>{t}</span>
        </div>
      ))}
    </div>
  </div>
);

/* ------------------------------------------------------------------ */
/* Map canvas                                                           */
/* ------------------------------------------------------------------ */
const GRASS: [number, number][] = [
  [85, 95], [163, 77], [234, 83], [297, 90], [350, 101], [417, 68], [467, 83], [570, 95], [605, 60], [672, 101], [741, 77], [799, 73],
  [61, 181], [152, 184], [103, 213], [207, 155], [268, 160], [204, 236], [268, 266], [323, 242], [369, 192], [409, 144], [411, 222], [464, 259],
  [497, 184], [534, 137], [587, 225], [598, 169], [562, 262], [685, 189], [722, 140], [738, 240], [793, 224], [825, 189], [670, 262], [127, 275],
  [97, 322], [162, 334], [214, 308], [271, 337], [364, 342], [401, 293], [484, 333], [526, 299], [627, 315], [688, 347], [743, 331], [797, 299],
  [80, 413], [199, 403], [263, 416], [326, 390], [435, 386], [500, 408], [605, 373], [667, 413], [762, 396], [816, 386], [154, 436], [345, 452],
  [409, 452], [546, 429], [611, 463], [781, 464], [85, 479], [234, 475], [300, 485], [171, 510], [470, 480], [536, 504], [670, 492], [735, 491],
  [234, 551], [308, 550], [366, 538], [464, 541], [603, 553], [685, 557], [807, 534], [98, 567], [526, 581], [497, 39],
];
const GRASS_LOW: [number, number][] = [
  [141, 915], [201, 950], [271, 914], [403, 947], [464, 920], [549, 935], [592, 917], [658, 911], [170, 1044], [419, 1034], [472, 1014], [559, 1014], [493, 1088], [536, 1086], [531, 1168],
];
const Tuft = ({ x, y }: { x: number; y: number }) => (
  <g stroke="#a9b98a" fill="none">
    <path d={`M${x - 4} ${y + 3}h8`} strokeOpacity=".7" />
    <path d={`M${x} ${y + 3}v-6M${x - 0.5} ${y + 2.5}l-2.500-3M${x + 0.5} ${y + 2.5}l2.500-3`} strokeOpacity=".9" />
  </g>
);

const MapCanvas = () => (
  <svg viewBox="301 122 1314 889" width="1314" height="889">
    <defs>
      <filter id="soil" x="0" y="0" width="100%" height="100%">
        <feTurbulence type="fractalNoise" baseFrequency="0.07" numOctaves="5" seed="4" />
        <feColorMatrix values="1.1 0 0 0 -0.22  0.8 0 0 0 -0.2  0.65 0 0 0 -0.16  0 0 0 0 1" />
        <feComposite in2="SourceGraphic" operator="in" />
      </filter>
      <filter id="canopy" x="0" y="0" width="100%" height="100%">
        <feTurbulence type="fractalNoise" baseFrequency="0.3" numOctaves="3" seed="9" />
        <feColorMatrix values="0 0 0 0 0.1  0 0 0 0 0.3  0 0 0 0 0.08  0.7 0 0 0 -0.22" />
        <feComposite in2="SourceGraphic" operator="in" />
      </filter>
      <pattern id="hatch" width="8" height="8" patternUnits="userSpaceOnUse" patternTransform="rotate(42)">
        <path d="M0 0v8" stroke="#1f78b4" strokeWidth="2.400" />
      </pattern>
      <pattern id="rows" width="4" height="4" patternUnits="userSpaceOnUse">
        <rect width="4" height="4" fill="#3a4652" />
        <path d="M0 1h4" stroke="#57595a" />
      </pattern>
    </defs>
    <rect x="301" y="122" width="1315" height="889" fill="#f2efe9" />
    <rect x="1000" y="122" width="616" height="190" fill="#c8d6ab" />
    {GRASS.map(([x, y]) => (
      <Tuft key={`${x}-${y}`} x={1270 + x / 2.412} y={110 + y / 3} />
    ))}

    {/* roads south of the forest */}
    <path d="M301 1011V971L358 925H395L393 943 302 1011z" fill="#dddddd" />
    <path d="M302 1011L393 943 600 930 912 1011z" fill="#ecefd3" />
    <path d="M295 983L355 938" stroke="#c4c4c4" strokeWidth="14" />
    <path d="M295 983L355 938" stroke="#fff" strokeWidth="12" />
    <path d="M302 1011L395 941" stroke="#b08a4a" strokeWidth="2.200" />
    <path d="M590 934L640 945 900 1000 952 1012" stroke="#aad3df" strokeWidth="6" fill="none" />
    <path d="M560 934L610 945 860 998 912 1010 930 1014" stroke="#c9c9c9" strokeWidth="13" fill="none" />
    <path d="M560 934L610 945 860 998 912 1010 930 1014" stroke="#fff" strokeWidth="11" fill="none" />
    <path d="M709 1013L733 980 752 972" stroke="#c9c9c9" strokeWidth="9" fill="none" />
    <path d="M709 1013L733 980 752 972" stroke="#fff" strokeWidth="7" fill="none" />
    <path d="M764 1013L772 988M767 1000L824 1012M772 988L800 994" stroke="#b08a4a" strokeWidth="2" fill="none" />
    <path d="M998 935L1026 1015" stroke="#c9c9c9" strokeWidth="12" />
    <path d="M998 935L1026 1015" stroke="#fff" strokeWidth="10" />

    {/* scrub below the forest edge */}
    <g transform="translate(1270 600) scale(.4146 .33333)">
      <path d="M60 893L178 1088 235 950 313 918 415 1035 462 1073 525 1235H638L550 1060 575 988 750 893z" fill="#c8d6ab" />
    </g>
    {GRASS_LOW.map(([x, y]) => (
      <Tuft key={`${x}-${y}`} x={1270 + x / 2.412} y={600 + y / 3} />
    ))}

    {/* forest */}
    <path d="M1270 310L1616 307V898H1270z" fill="#458c40" />
    <path d="M1270 310L1616 307V898H1270z" fill="#fff" filter="url(#canopy)" />
    <path d="M1346 309.500L1616 307.500" stroke="#6fb86b" strokeWidth="2" />
    <path d="M1290 898H1616" stroke="#2f6e34" strokeWidth="1" />
    <g fill="none" stroke="#84a95a" strokeOpacity=".5" strokeWidth="1.300" strokeLinejoin="round">
      <path d="M1375 439L1388 430 1400 424 1418 421 1432 418 1445 410 1460 399 1475 391 1490 384 1505 378 1520 368 1540 360 1560 355 1585 340 1608 328" />
      <path d="M1438 508L1460 494 1480 487 1500 478 1530 460 1550 447 1570 440 1616 412" />
      <path d="M1500 578L1530 560 1550 546 1565 530 1590 523 1616 510" />
      <path d="M1318 368L1335 393 1342 405 1350 418 1370 440 1385 460 1400 478 1420 492 1440 508 1455 526 1470 545 1485 563 1500 578 1523 598 1545 615 1566 636 1590 660 1604 684 1616 702" strokeWidth="1.700" />
      <path d="M1380 313L1392 345 1400 362 1405 380M1332 340L1328 365M1362 388L1420 391M1430 322L1450 330 1440 345M1410 318L1440 325" />
      <path d="M1560 365L1568 380 1563 410M1515 440L1530 458 1540 470 1555 490 1616 497M1552 530L1575 545 1565 560M1430 480L1445 475" />
      <path d="M1353 669L1437 669M1353 669L1375 690 1385 706 1402 725 1406 760 1410 780M1395 700L1408 680 1420 660 1435 642 1450 625M1440 720L1470 714 1500 708 1498 660 1515 662" />
      <path d="M1410 779L1425 770M1545 745L1580 728 1608 714M1565 642L1590 628 1616 612" />
      <path d="M1320 790L1345 812 1362 832 1365 845M1340 862L1370 845 1395 844M1395 870L1403 835 1420 825 1426 817M1340 863L1365 890" />
      <path d="M1415 890L1428 872 1440 855 1455 840 1470 825 1485 812 1500 800 1520 795M1392 870L1410 883 1425 897M1395 872L1385 897M1570 897L1585 880 1600 868 1616 868" strokeWidth="1.600" />
      <path d="M1455 740L1458 730 1480 718 1505 712M1530 755L1545 800M1548 842L1560 820 1590 800" />
    </g>

    {/* clearings */}
    <g>
      <path d="M1275 310H1346.500L1337.500 340 1275 325z" fill="#6a5645" />
      <path d="M1275 310H1346.500L1337.500 340 1275 325z" fill="#fff" filter="url(#soil)" opacity=".6" />
      <path d="M1275 311H1331.500L1330 320 1320 327H1301L1275 316z" fill="#377eb8" stroke="#23618f" />
      <path d="M1275 373L1307 376 1483 581 1492 592 1275 587z" fill="#7d4f3a" />
      <path d="M1275 373L1307 376 1483 581 1492 592 1275 587z" fill="#fff" filter="url(#soil)" opacity=".3" />
      <path d="M1275 373L1307 376 1492 592 1481 590 1440 545 1400 500 1352 434 1318 392 1298 380 1275 377z" fill="#2d2c1c" opacity=".8" />
      <path d="M1275 584L1492 590V592L1275 588z" fill="#22301c" />
    </g>
    <g transform="translate(1270 110) scale(.4146 .33333)">
      <path
        d="M20 830L55 832V898L97 902 92 1065 133 1068 137 1015H185V1038L208 1040 210 1085 250 1098 252 1140 270 1142V1183L315 1188 325 1205V1242L348 1245 350 1268H366V1300H402V1365L443 1368V1408L265 1400 262 1415 126 1400V1338L80 1335V1295L37 1288V1235L20 1230z"
        fill="#3d4650"
        stroke="#1f78b4"
        strokeWidth="1.500"
        vectorEffect="non-scaling-stroke"
      />
    </g>
    <path
      d="M1275 386.700L1292.800 387.300V409.300L1310.200 410.700 1308 465 1325 466 1326.800 448.300H1346.700V456L1356 456.700 1357 471.700 1373.600 476 1374.500 490 1382 490.700V504.300L1400.600 506 1404.700 511.700V524L1414.300 525 1415 532.700H1421.700V543.300H1436.700V565L1453.700 566V579.300L1379.900 576.700 1378.600 581.700 1322.200 576.700V556L1303 555V541.700L1285.300 539.300V521.700L1275 520z"
      fill="url(#rows)"
    />
    <ellipse cx="1332" cy="504" rx="5" ry="2.500" fill="#a09a8c" opacity=".8" />
    <ellipse cx="1333" cy="539" rx="6" ry="2.500" fill="#a09a8c" opacity=".8" />
    <path
      d="M1275 386.700L1292.800 387.300V409.300L1310.200 410.700 1308 465 1325 466 1326.800 448.300H1346.700V456L1356 456.700 1357 471.700 1373.600 476 1374.500 490 1382 490.700V504.300L1400.600 506 1404.700 511.700V524L1414.300 525 1415 532.700H1421.700V543.300H1436.700V565L1453.700 566V579.300L1379.900 576.700 1378.600 581.700 1322.200 576.700V556L1303 555V541.700L1285.300 539.300V521.700L1275 520z"
      fill="url(#hatch)"
      stroke="#1f78b4"
      strokeWidth="1.500"
    />
    <g>
      <path d="M1275 684L1331.400 685.700 1368.700 737.700 1354 802 1324 811 1337 867.700 1315 895 1320 898H1275z" fill="#4a3428" />
      <path d="M1275 684L1331.400 685.700 1368.700 737.700 1354 802 1324 811 1337 867.700 1315 895 1320 898H1275z" fill="#fff" filter="url(#soil)" opacity=".55" />
      <path d="M1288 780L1320 786 1330 830 1322 870M1300 700L1318 722 1330 720 1350 750M1295 760L1320 775M1318 700L1310 740 1322 770" stroke="#9c5f44" strokeWidth="2.500" fill="none" opacity=".45" />
      <path d="M1281 878L1300 868 1312 870 1308 880 1297 892z" fill="#b9a98f" opacity=".85" />
      <path d="M1275 813H1298L1305 818 1304.500 830 1310.600 840 1318.500 856.700 1317 865 1291 871.500 1275 850z" fill="#377eb8" stroke="#23618f" />
    </g>

    {/* expressway with its name */}
    <path d="M1275 880L1366 1012H1344L1275 905z" fill="#e892a2" />
    <path d="M1275 880L1366 1012M1275 905L1345 1012" stroke="#dc4f7b" strokeWidth="1.300" />
    <path id="expressway" d="M1294 929L1322 970 1345 1002 1380 1052" fill="none" />
    <text fontSize="12" fill="#222" letterSpacing="-.1" fontFamily="'Noto Sans', sans-serif">
      <textPath href="#expressway">Andarawewa - Hambantota</textPath>
    </text>

    <circle cx="1280" cy="470" r="6" fill="#e0483e" stroke="#7a1f1a" />
    <circle cx="1280" cy="573" r="5" fill="#e0483e" stroke="#7a1f1a" />
    <g fontFamily="'Liberation Sans', sans-serif" fontSize="17.500" letterSpacing="0" fill="#fff" stroke="#222" strokeWidth="2.200" paintOrder="stroke" strokeLinejoin="round">
      <text x="1374.500" y="475" textAnchor="end">Power Station</text>
      <text x="1281" y="591" textLength="241" lengthAdjust="spacingAndGlyphs">
        10MW Saga solar power p
        <tspan fill="#8fcb8f" stroke="#2f6a33">lant</tspan>
      </text>
    </g>
    <text x="1364" y="606" fontSize="13" letterSpacing="0" textLength="191" lengthAdjust="spacingAndGlyphs" fill="#0a120a" fontFamily="'Noto Sans', sans-serif">Gonnoruwa Administrative Area</text>
  </svg>
);

/* ------------------------------------------------------------------ */
/* Statistics dock                                                      */
/* ------------------------------------------------------------------ */
const RightDock = () => (
  <div className="ml-[6px] flex flex-1 flex-col">
    <div className="flex h-[19px] items-center justify-between pl-[4px] pr-[2px] pt-[1px]">
      <span>Statistics</span>
      <div className="flex gap-[2px]">
        <svg width="12" height="12" viewBox="0 0 12 12" fill="none" stroke="#555">
          <rect x=".5" y=".5" width="11" height="11" rx="2" />
          <path d="M3 5h4v4H3zM5 5V3h4v4H7" />
        </svg>
        <svg width="12" height="12" viewBox="0 0 12 12" fill="none" stroke="#555">
          <rect x=".5" y=".5" width="11" height="11" rx="2" />
          <path d="M3 3l6 6M9 3l-6 6" strokeWidth="2" />
        </svg>
      </div>
    </div>
    <Combo cls="h-[24px] pl-[4px]">
      <Icon n="poly" s={17} />
      <span className="ml-[1px]">Forest</span>
    </Combo>
    <div className="mt-[3px] flex h-[23px] gap-[6px]">
      <div className={`flex w-[268px] justify-end bg-white ${field}`}>
        <div className={`flex w-[20px] items-center justify-center rounded-r-[3px] border-l border-[#c4c4c4] ${grad}`}>
          <Tri />
        </div>
      </div>
      <Btn cls="w-[24px]">
        <Icon n="epsilon" s={15} />
      </Btn>
    </div>
    <div className="mt-[3px] h-[768px] border border-[#b4b4b4] bg-white">
      <div className="flex h-[19px] bg-[#efefef]">
        <div className={`flex w-[100px] items-center justify-center border-b border-r border-[#b4b4b4] ${grad}`}>Statistic</div>
        <div className={`flex w-[101px] items-center justify-center border-b border-[#b4b4b4] ${grad}`}>Value</div>
      </div>
    </div>
    <div className="flex h-[27px] items-center pt-px">
      <Check />
      <span className="ml-[4px]">Selected features only</span>
      <div className="ml-auto flex items-center">
        <Icon n="copy" s={15} />
        <div className="ml-[12px] mr-[8px] flex">
          <Icon n="refresh" s={15} />
        </div>
        <Btn cls="h-[20px] w-[22px]">
          <span className="pl-[3px]">...</span>
          <Tri w={5} />
        </Btn>
      </div>
    </div>
    <div className="flex items-start border-t border-[#b4b4b4]">
      <div className="flex h-[22px] w-[68px] items-center justify-center rounded-b-[3px] border border-t-0 border-[#b4b4b4] bg-[#f8f8f8]">Statistics</div>
      <div className="flex h-[20px] w-[81px] items-center justify-center rounded-b-[3px] border border-l-0 border-t-0 border-[#b4b4b4] bg-[#dcdcdc]">Search QMS</div>
    </div>
  </div>
);

const StatusBar = () => (
  <div className="flex h-[28px] shrink-0 items-center pl-[4px]">
    <div className={`flex h-[22px] w-[200px] items-center bg-white pl-[7px] text-[#7a7a7a] ${field}`}>
      <Search s={13} />
      <span className="ml-[7px] tracking-[-0.35px]">Type to locate (Ctrl+K)</span>
    </div>
    <span className="ml-[900px] w-[57px] tracking-[-0.55px]">Coordinate</span>
    <div className={`flex h-[22px] w-[118px] items-center bg-white pl-[5px] ${field}`}>6.22544°, 81.06677°</div>
    <svg className="ml-[3px]" width="16" height="16" viewBox="0 0 24 24">
      <rect x="2" y="3" width="9" height="13" rx="4.500" fill="#eee" stroke="#444" strokeWidth="1.500" transform="rotate(-25 6 9)" />
      <rect x="10" y="9" width="9" height="14" rx="4.500" fill="#ccc" stroke="#444" strokeWidth="1.500" transform="rotate(20 14 16)" />
      <path d="M13 7l3-5M17 8l5-4" stroke="#444" strokeWidth="1.500" />
    </svg>
    <span className="ml-[13px] w-[29px] tracking-[-0.5px]">Scale</span>
    <div className={`flex h-[22px] w-[81px] bg-white ${field}`}>
      <div className="flex flex-1 items-center pl-[3px]">1:7589</div>
      <div className={`flex w-[20px] items-center justify-center rounded-r-[3px] border-l border-[#c4c4c4] ${grad}`}>
        <Tri />
      </div>
    </div>
    <svg className="ml-[11px]" width="14" height="16" viewBox="0 0 14 16">
      <path d="M3.500 8V4.500a3.500 3.500 0 017 0V8" fill="none" stroke="#888" strokeWidth="1.500" />
      <rect x="1" y="7" width="12" height="8.500" rx="1" fill="#6d6d6d" />
    </svg>
    <span className="ml-[8px] w-[47px] tracking-[-0.95px]">Magnifier</span>
    <Spin v="100%" cls="h-[20px] w-[84px]" />
    <span className="ml-[8px] w-[51px] tracking-[-0.6px]">Rotation</span>
    <Spin v="0.0 °" cls="h-[20px] w-[84px]" />
    <div className="ml-[7px] flex">
      <Check on />
    </div>
    <span className="ml-[3px] w-[52px] tracking-[-0.7px]">Render</span>
    <svg width="15" height="15" viewBox="0 0 24 24" fill="none" stroke="#555" strokeWidth="1.600">
      <circle cx="12" cy="12" r="10.500" fill="#ccc" />
      <path d="M1.500 12h21M4 6h16M4 18h16M12 1.500v21M12 1.500c-6 6-6 15 0 21M12 1.500c6 6 6 15 0 21" />
    </svg>
    <span className="ml-px w-[78px] tracking-[-0.6px]">EPSG:4326</span>
    <svg width="16" height="16" viewBox="0 0 16 16">
      <path d="M8 1c4.500 0 7.500 2 7.500 5.500S13 12 11 12l1 3.500L8 12C3.500 12 .5 10 .5 6.500S3.500 1 8 1z" fill="#6b6b6b" />
      <path d="M4 6.500h1.500M7.300 6.500h1.500M10.600 6.500h1.500" stroke="#fff" strokeWidth="1.500" />
    </svg>
  </div>
);

/* ------------------------------------------------------------------ */
/* Layer properties dialog                                              */
/* ------------------------------------------------------------------ */
const SIDE: [string, string][] = [
  ["info", "Information"],
  ["wrench", "Source"],
  ["brush", "Symbology"],
  ["labels", "Labels"],
  ["masks", "Masks"],
  ["view3d", "3D View"],
  ["diagrams", "Diagrams"],
  ["fields", "Fields"],
  ["form", "Attributes Form"],
  ["joins", "Joins"],
  ["storage", "Auxiliary Storage"],
  ["actions", "Actions"],
  ["display", "Display"],
  ["rendering", "Rendering"],
  ["clock", "Temporal"],
  ["variables", "Variables"],
  ["elevation", "Elevation"],
  ["metadata", "Metadata"],
  ["dependencies", "Dependencies"],
  ["legend", "Legend"],
  ["server", "QGIS Server"],
  ["digitizing", "Digitizing"],
];

const SideBar = () => (
  <div className="flex w-[222px] shrink-0 flex-col bg-[#5c5c5c]">
    <div className="mt-px flex h-[21px] items-center rounded-[3px] border border-[#acacac] bg-white pl-[7px]">
      <Search s={13} />
    </div>
    <div className="mt-[6px]">
      {SIDE.map(([ic, t]) =>
        t === "Symbology" ? (
          <div key={t} className="flex h-[36px] items-center bg-[#efefef] pl-[7px] text-black">
            <Icon n={ic} s={25} />
            <span className="ml-[8px] pt-px">{t}</span>
          </div>
        ) : (
          <div key={t} className="flex h-[36px] items-center pl-[5px] text-white">
            <Icon n={ic} s={24} />
            <span className="ml-[8px] pt-px">{t}</span>
          </div>
        )
      )}
    </div>
  </div>
);

const DotGrid = ({ rows, cols, ox, oy, px, py, r, c }: { rows: number; cols: number; ox: number; oy: number; px: number; py: number; r: number; c: string }) => (
  <g fill={c}>
    {Array.from({ length: rows }).map((_, i) =>
      Array.from({ length: cols - (i % 2) }).map((__, j) => <circle key={`${i}-${j}`} cx={ox + j * px + (i % 2 ? px / 2 : 0)} cy={oy + i * py} r={r} />)
    )}
  </g>
);

const Swatch = ({ k }: { k: string }) => (
  <svg width="70" height="64" viewBox="-35 -32 70 64">
    <defs>
      <radialGradient id="plasma" gradientUnits="userSpaceOnUse" cx="-31" cy="-27" r="80">
        <stop offset="0" stopColor="#1d0a8f" />
        <stop offset=".3" stopColor="#8a0aa5" />
        <stop offset=".52" stopColor="#cc4778" />
        <stop offset=".76" stopColor="#f68d45" />
        <stop offset="1" stopColor="#f7e225" />
      </radialGradient>
      <clipPath id="sw">
        <rect x="-31" y="-26" width="62" height="52" />
      </clipPath>
    </defs>
    {k === "plasma" && <rect x="-31" y="-27" width="62" height="53" fill="url(#plasma)" stroke="#222" />}
    {k === "gray" && <rect x="-30.500" y="-26" width="61" height="52" fill="#969696" />}
    {(k === "slash" || k === "cross") && (
      <path clipPath="url(#sw)" d={Array.from({ length: 16 }, (_, i) => `M${-84 + i * 9} 26l52-52`).join("")} stroke="#111" strokeWidth="1.200" />
    )}
    {(k === "back" || k === "cross") && (
      <path clipPath="url(#sw)" d={Array.from({ length: 16 }, (_, i) => `M${-84 + i * 9} -26l52 52`).join("")} stroke="#111" strokeWidth="1.200" />
    )}
    {["slash", "back", "cross"].includes(k) && <rect x="-31" y="-26.500" width="62" height="53" fill="none" stroke="#111" strokeWidth="1.500" />}
    {k === "blue" && <rect x="-31" y="-26" width="62" height="52" rx="1" fill="none" stroke="#377eb8" strokeWidth="3.500" />}
    {k === "green" && <rect x="-31" y="-26" width="62" height="52" rx="1" fill="none" stroke="#4daf4a" strokeWidth="3.500" />}
    {k === "red" && <rect x="-31" y="-26" width="62" height="52" rx="1" fill="none" stroke="#e31a1c" strokeWidth="3.500" />}
    {k === "xpat" && (
      <g>
        <rect x="-31.500" y="-25.500" width="62" height="52" fill="#f7f7f7" stroke="#999" strokeWidth="1.500" />
        <g fill="#4daf4a" stroke="#36833a" strokeWidth=".5">
          {[[-31.5, -26], [2.5, -26], [30, -19], [30, 15], [7, 26], [-27, 26], [-31.5, -4]].map(([x, y]) => (
            <circle key={`${x},${y}`} cx={x} cy={y} r="3.900" />
          ))}
        </g>
        <g fill="#e31a1c" stroke="#a81416" strokeWidth=".5">
          {[[-31.5, -21], [-15, -26], [19, -26], [30, -2], [24, 26], [-10, 26], [-31.5, 13]].map(([x, y]) => (
            <circle key={`${x},${y}`} cx={x} cy={y} r="3.900" />
          ))}
        </g>
      </g>
    )}
    {k === "dots" && (
      <g>
        <DotGrid rows={5} cols={7} ox={-26} oy={-17} px={9} py={9} r={1.4} c="#111" />
        <rect x="-31" y="-26" width="62" height="52" fill="none" stroke="#222" strokeWidth="1.400" />
      </g>
    )}
  </svg>
);

const SYMBOLS: [string, string][][] = [
  [
    ["plasma", "gradient   plasma"],
    ["gray", "gray 3 fill"],
    ["slash", "hashed black /"],
    ["back", "hashed black \\"],
    ["cross", "hashed black X"],
  ],
  [
    ["blue", "outline blue"],
    ["green", "outline green"],
    ["red", "outline red"],
    ["xpat", "outline xpattern"],
    ["dots", "pattern dot black"],
  ],
];

const Sep = ({ cls = "" }: { cls?: string }) => <div className={`h-[2px] border-b border-t border-b-white border-t-[#a0a0a0] ${cls}`} />;

const TreeRow = ({ pad, icon, bold = false, arrow = false, children, sel = false }: { pad: string; icon: ReactNode; bold?: boolean; arrow?: boolean; children: ReactNode; sel?: boolean }) => (
  <div className={`flex h-[18px] items-center ${pad} ${sel ? "bg-[#efefef]" : ""} ${bold ? "font-bold" : ""}`}>
    <div className="flex w-[9px] shrink-0">{arrow && <Tri />}</div>
    <div className="ml-[8px] flex h-[16px] w-[16px] shrink-0 items-center justify-center">{icon}</div>
    <span className="ml-[5px]">{children}</span>
  </div>
);

const SymbolTree = () => (
  <div className="w-[589px] border border-[#b4b4b4] bg-white">
    <TreeRow pad="pl-[6px]" sel bold arrow icon={<LayerSwatch k="tree" />}>
      Fill
    </TreeRow>
    <TreeRow pad="pl-[26px]" icon={<div className="h-[2px] w-[16px] bg-[#a4cb94]" />}>
      Simple Line
    </TreeRow>
    <TreeRow
      pad="pl-[26px]"
      arrow
      icon={
        <svg width="16" height="16" viewBox="0 0 16 16" fill="#4d6a45">
          <circle cx="4" cy="9" r="1.300" />
          <circle cx="13" cy="9" r="1.300" />
          <circle cx="1" cy=".5" r="1" />
          <circle cx="9" cy=".5" r="1" />
        </svg>
      }
    >
      Point Pattern Fill
    </TreeRow>
    <TreeRow pad="pl-[46px]" bold arrow icon={<div className="h-[3px] w-[3px] rounded-full bg-[#4d6a45]" />}>
      Marker
    </TreeRow>
    <TreeRow pad="pl-[66px]" icon={<div className="h-[3px] w-[3px] rounded-full bg-[#4d6a45]" />}>
      Simple Marker
    </TreeRow>
  </div>
);

const SymBtn = ({ children, off = true }: { children: ReactNode; off?: boolean }) => (
  <div className={`flex h-[24px] w-[28px] items-center justify-center rounded-[3px] border ${off ? "border-[#cfcfcf] bg-[#f3f3f3]" : "border-[#acacac] bg-[#f8f8f8]"}`}>
    <svg width="16" height="16" viewBox="0 0 16 16">
      {children}
    </svg>
  </div>
);

const SymbolEditor = () => (
  <div className="mt-[6px] flex h-[136px]">
    <div className="w-[142px] pl-[38px] pt-[38px]">
      <svg width="61" height="61" viewBox="0 0 61 61">
        <rect x=".7" y=".7" width="59.600" height="59.600" fill="#efefef" stroke="#84b870" strokeWidth="1.400" />
        <DotGrid rows={6} cols={7} ox={3.5} oy={8.5} px={9} py={9} r={1.6} c="#46604a" />
      </svg>
    </div>
    <SymbolTree />
    <div className="ml-[6px] grid grid-cols-[28px_28px] content-start gap-x-[6px] gap-y-[5px] pt-[1px]">
      <SymBtn off={false}>
        <path d="M5.500 1.500h5v4h4v5h-4v4h-5v-4h-4v-5h4z" fill="#fff" stroke="#4e8a52" />
        <path d="M8 3.500v9M3.500 8h9" stroke="#4e8a52" strokeWidth="2" />
      </SymBtn>
      <SymBtn>
        <path d="M8 3l6 10H2z" fill="#ccd2d8" stroke="#c0c4c8" />
      </SymBtn>
      <SymBtn>
        <rect x="2" y="5.500" width="12" height="5" fill="#f8f4f4" stroke="#d8cccc" />
        <path d="M4.500 8h7" stroke="#e0c4c4" strokeWidth="1.500" />
      </SymBtn>
      <SymBtn>
        <path d="M8 13L2 3h12z" fill="#ccd2d8" stroke="#c0c4c8" />
      </SymBtn>
      <SymBtn>
        <path d="M2 4h9v10H2z" fill="#eee" stroke="#ccc" strokeWidth="1.300" />
        <path d="M5 1.500h8v11H5z" fill="#f2f2f2" stroke="#ccc" strokeWidth="1.300" />
        <rect x="9.500" y="10" width="5" height="5" fill="#e6e0c4" />
      </SymBtn>
      <SymBtn>
        <rect x="2.500" y="7.500" width="11" height="7.500" rx="1" fill="#d8d6c8" />
        <path d="M6 3c1-2 6-2 6 2v3" fill="none" stroke="#ccc" strokeWidth="1.500" />
      </SymBtn>
    </div>
  </div>
);

const FillProps = () => (
  <>
    <div className="mt-[7px] flex h-[22px] items-center">
      <span className="w-[43px] tracking-[-0.8px]">Color</span>
      <div className={`flex h-[22px] w-[735px] px-[4px] py-[2px] ${field} ${grad}`}>
        <div className="flex-1 rounded-[3px] bg-[#85b66f]" />
      </div>
      <Btn cls="h-[22px] w-[12px]">
        <Tri w={7} />
      </Btn>
    </div>
    <div className="mt-[9px] flex h-[20px] items-center">
      <span className="w-[44px] tracking-[-0.6px]">Opacity</span>
      <Slider cls="w-[606px] pb-[2px]" />
      <Spin v="100.0 %" upOff cls="ml-[4px] h-[20px] w-[100px]" />
      <svg className="ml-[9px]" width="24" height="18" viewBox="0 0 24 18" fill="none" stroke="#666" strokeWidth="1.300">
        <path d="M6 3L1 9l5 6z" fill="#999" stroke="#777" />
        <path d="M6.500 1.500h12v15h-12z" fill="#fff" />
        <path d="M9 5h7M9 12.500h7M6.500 9h12" />
        <path d="M17 12h7l-3.500 4z" fill="#444" stroke="none" />
      </svg>
    </div>
    <div className="mt-[9px] flex h-[22px] items-center">
      <span className="w-[43px]">Unit</span>
      <Combo cls="h-[22px] w-[747px] pl-[3px] tracking-[-0.5px]">Millimeters</Combo>
    </div>
  </>
);

const SymbolBrowser = () => (
  <>
    <div className="mt-[5px] flex h-[22px] items-center">
      <div className={`flex h-[22px] w-[760px] bg-white ${field}`}>
        <div className="flex flex-1 items-center pl-[9px]">
          <Search s={13} />
          <span className="ml-[6px] tracking-[-0.55px]">Favorites</span>
          <svg className="ml-auto mr-[9px]" width="13" height="11" viewBox="0 0 13 11">
            <path d="M4 0h9v11H4L0 5.500z" fill="#8a8a8a" />
            <path d="M5.500 3l5 5M10.500 3l-5 5" stroke="#fff" strokeWidth="1.300" />
          </svg>
        </div>
        <div className={`flex w-[20px] items-center justify-center rounded-r-[3px] border-l border-[#c4c4c4] ${grad}`}>
          <Tri />
        </div>
      </div>
      <div className="ml-[10px] flex">
        <Icon n="style" s={16} />
      </div>
    </div>
    <div className="mt-[5px] flex h-[275px] w-[790px] border border-[#b4b4b4] bg-white">
      <div className="flex-1 overflow-hidden pl-[2px]">
        {SYMBOLS.map((row, i) => (
          <div key={i} className={`flex ${i === 0 ? "mt-[-13px]" : ""} h-[142px]`}>
            {row.map(([k, t]) => (
              <div key={t} className="flex w-[130px] flex-col items-center">
                <Swatch k={k} />
                <div className={`mt-[29px] flex h-[16px] items-center whitespace-pre px-[3px] ${k === "dots" ? "bg-[#efefef]" : ""}`}>{t}</div>
              </div>
            ))}
          </div>
        ))}
      </div>
      <div className="flex w-[14px] flex-col border-l border-[#b4b4b4] bg-[#e2e2e2]">
        <div className="flex h-[14px] items-center justify-center border-b border-[#b4b4b4] bg-[#fafafa]">
          <Tri d="up" w={7} />
        </div>
        <div className="mt-[41px] h-[139px] border-y border-[#b4b4b4] bg-[#fafafa]" />
        <div className="mt-auto flex h-[14px] items-center justify-center border-t border-[#b4b4b4] bg-[#fafafa]">
          <Tri w={7} />
        </div>
      </div>
    </div>
    <div className="mt-[6px] flex h-[23px] w-[790px] items-center">
      <div className="flex h-[23px] w-[24px] items-center justify-center rounded-[3px] border border-[#adadad] bg-[#dcdcdc]">
        <Icon n="grid" s={15} />
      </div>
      <div className="ml-[5px] flex">
        <Icon n="tableSmall" s={14} />
      </div>
      <span className="ml-[10px] tracking-[-0.4px]">pattern dot black</span>
      <Btn cls="ml-auto h-[21px] w-[80px] tracking-[-0.45px]">Save Symbol...</Btn>
      <Btn cls="ml-[6px] h-[21px] w-[80px] pl-[5px] tracking-[-0.45px]">
        Advanced
        <div className="ml-[11px] flex pb-[2px]">
          <Tri w={6} />
        </div>
      </Btn>
    </div>
  </>
);

const LayerRendering = () => (
  <>
    <div className="mt-[19px] flex h-[20px] items-center font-bold tracking-[-0.35px]">
      <div className="ml-[3px] mr-[8px] flex pt-[3px]">
        <Tri w={10} c="#333" />
      </div>
      Layer Rendering
    </div>
    <div className="h-[146px] rounded-[3px] border border-[#d2d2d2] bg-[#ececec] pl-[2px]">
      <div className="mt-[10px] flex h-[20px] items-center">
        <span className="w-[76px] tracking-[-0.6px]">Opacity</span>
        <Slider cls="w-[610px] pb-[2px]" />
        <Spin v="100.0 %" upOff cls="ml-[4px] h-[20px] w-[100px]" />
      </div>
      <div className="mt-[5px] flex h-[40px]">
        <div className="flex w-[75px] items-center whitespace-nowrap pt-[4px] tracking-[-0.85px]">Blending mode</div>
        <div className="w-[357px]">
          <div className="flex h-[16px] items-center tracking-[-0.5px]">Layer</div>
          <Combo cls="h-[24px] pl-[3px] tracking-[-0.5px]">Normal</Combo>
        </div>
        <div className="ml-px w-[357px]">
          <div className="flex h-[16px] items-center tracking-[-0.5px]">Feature</div>
          <Combo cls="h-[24px] pl-[3px] tracking-[-0.5px]">Normal</Combo>
        </div>
      </div>
      {["Draw effects", "Control feature rendering order"].map((t, i) => (
        <div key={t} className="mt-[6px] flex h-[23px] w-[790px] items-center">
          <Check />
          <span className={`ml-[4px] ${i === 0 ? "tracking-[-0.6px]" : "tracking-[-0.83px]"}`}>{t}</span>
          <div className="ml-auto flex h-[23px] w-[23px] items-center justify-center rounded-[3px] border border-[#cfcfcf] bg-[#f3f3f3]">
            <svg width="16" height="16" viewBox="0 0 16 16">
              {i === 0 ? (
                <path d="M7 2l1.500 4.500H13L9.500 9.500l1.500 5-4-3-4 3 1.500-5L1 6.500h4.500zM12 9v5M10.500 12h4" fill="#cdcbb8" stroke="#c4c4bc" strokeWidth=".7" />
              ) : (
                <g>
                  <path d="M2 7l2-6 2 6M2.800 5h2.500M2 9.500h4L2 15h4.500" fill="none" stroke="#c4b4b4" strokeWidth="1.500" />
                  <path d="M11.500 1v11M8 9l3.500 5L15 9z" fill="#b8bcc2" stroke="#b8bcc2" strokeWidth="1.500" />
                </g>
              )}
            </svg>
          </div>
        </div>
      ))}
    </div>
  </>
);

const Dialog = () => (
  <div className="absolute left-[252px] top-[89px] flex h-[855px] w-[1030px] flex-col border border-[#5f5f5f] bg-[#efefef] shadow-[0_4px_20px_2px_rgba(0,0,0,0.4)]">
    <div className="flex h-[30px] shrink-0 items-center bg-white pl-[7px] text-black">
      <Logo s={18} />
      <span className="ml-[4px] tracking-[-0.38px]">Layer Properties — Tree — Symbology</span>
      <svg className="ml-auto mr-[9px]" width="12" height="12" viewBox="0 0 12 12" stroke="#111" strokeWidth="1.100">
        <path d="M1 1l10 10M11 1L1 11" />
      </svg>
    </div>
    <div className="flex flex-1">
      <SideBar />
      <div className="flex w-[806px] flex-col pl-[4px] pr-[3px]">
        <Combo cls="mt-[3px] h-[24px] shrink-0 pl-[7px]">
          <svg width="13" height="15" viewBox="0 0 13 15" fill="#16b05a" stroke="#0a5c2e">
            <rect x=".5" y=".5" width="10" height="3.500" />
            <rect x="2.500" y="5.500" width="10" height="3.500" />
            <rect x=".5" y="10.500" width="10" height="3.500" />
          </svg>
          <span className="ml-[3px] tracking-[-0.8px]">Single Symbol</span>
        </Combo>
        <SymbolEditor />
        <Sep cls="mt-[6px]" />
        <FillProps />
        <Sep cls="mt-[4px] w-[790px]" />
        <SymbolBrowser />
        <LayerRendering />
        <div className="mt-[6px] flex h-[21px] tracking-[-0.4px]">
          <Btn cls="w-[80px]">
            <span className="ml-[16px]">Style</span>
            <div className="ml-[24px] flex pb-[2px]">
              <Tri w={6} />
            </div>
          </Btn>
          <div className="ml-auto flex gap-[6px]">
            <Btn cls="w-[80px]">OK</Btn>
            <Btn cls="w-[80px]">Cancel</Btn>
            <div className="flex w-[80px] items-center justify-center rounded-[3px] border border-[#3daee9] bg-linear-to-b from-[#fdfdfd] to-[#e6eff5]">Apply</div>
            <Btn cls="w-[80px]">Help</Btn>
          </div>
        </div>
      </div>
    </div>
  </div>
);

/* ------------------------------------------------------------------ */
/* Windows taskbar                                                      */
/* ------------------------------------------------------------------ */
const sans = "Liberation Sans, sans-serif";
const APPS: { k: string; run?: boolean; active?: boolean; art: ReactNode }[] = [
  {
    k: "edge",
    art: (
      <g>
        <circle cx="12" cy="12" r="11.500" fill="#1474c4" />
        <path d="M.6 10.500C2 3.500 7.500.5 12.500.5 19 .5 23.500 5 23.500 10c0 4-4 6-8 4.500C16 10 13 7 8.500 7.500 5 8 2 9 .6 10.500z" fill="#35c1b0" />
        <path d="M14 .6C20 1.500 23.500 5.500 23.500 10c0 4-4 6-8 4.500C17 11 14.500 7.500 11 7.300z" fill="#6be05a" opacity=".6" />
        <path d="M9 10c-3 6 2 12 11 10.500C13 26 1 23 .6 12.500c2-4 6-5 8.400-2.500z" fill="#0c4f93" />
        <path d="M11 11.500c2-1 4 0 4.500 3 2 1.500 5 1.500 7 .5l-1.500 3.500c-5 2-12 0-10-7z" fill="#1e1e1e" />
      </g>
    ),
  },
  {
    k: "explorer",
    run: true,
    art: (
      <g>
        <path d="M2 3h8l2 2h10v16H2z" fill="#f6cb51" />
        <path d="M2 3h8l1.500 3H2z" fill="#d9a21e" />
        <path d="M5 13h14v9h-4v-4H9v4H5z" fill="#3f9ae0" />
      </g>
    ),
  },
  {
    k: "store",
    art: (
      <g>
        <path d="M7 6V2h10v4" fill="none" stroke="#2ba5e0" strokeWidth="2" />
        <rect x="1" y="5" width="22" height="18.500" rx="2" fill="#f3f3f3" />
        <path d="M7 9h4.500v4.500H7z" fill="#f25022" />
        <path d="M12.500 9H17v4.500h-4.500z" fill="#7fba00" />
        <path d="M7 14.500h4.500V19H7z" fill="#00a4ef" />
        <path d="M12.500 14.500H17V19h-4.500z" fill="#ffb900" />
      </g>
    ),
  },
  {
    k: "mail",
    art: (
      <g>
        <path d="M0 8.500L12 1l12 7.500V23H0z" fill="#0f6cbd" />
        <path d="M2 8h20v7l-10 3-10-3z" fill="#e6f2fb" />
        <path d="M0 8.500L12 16 0 23z" fill="#2b97e3" />
        <path d="M24 8.500V23H0z" fill="#41aef2" />
      </g>
    ),
  },
  {
    k: "brave",
    run: true,
    art: (
      <g>
        <path d="M7 .5h10L21.500 5l-1 12L12 23.500 3.500 17l-1-12z" fill="#f4511e" />
        <path d="M7 5l5 1 5-1 1.500 3-3 6-3.500 5-3.500-5-3-6z" fill="#fff" />
        <path d="M8.500 9l3.500 1.500L15.500 9M12 11v4M9.500 14.500h5" stroke="#f4511e" strokeWidth="1.500" fill="none" />
      </g>
    ),
  },
  {
    k: "youtube",
    run: true,
    art: (
      <g>
        <rect x="1" y="4" width="22" height="16" rx="3" fill="#f00" />
        <path d="M9.500 8.500v7l6-3.500z" fill="#fff" />
      </g>
    ),
  },
  {
    k: "whatsapp",
    run: true,
    art: (
      <g>
        <path d="M12 .5A11.500 11.500 0 002 18L.5 23.500 6 22A11.500 11.500 0 1012 .5z" fill="#fff" />
        <circle cx="12" cy="12" r="9.500" fill="#3fc351" />
        <path d="M8 6c-3 2 1 9 6 11 3 1 4-2 3-3l-2-1-2 1c-2-1-3-2-3.500-4l1-1.500z" fill="#fff" />
        <circle cx="23" cy="19.500" r="8.300" fill="#2c2c2c" stroke="#bbb" strokeWidth="1.200" />
        <text x="23" y="23.600" fontSize="11.500" fontWeight="700" textAnchor="middle" fill="#fff" fontFamily={sans}>16</text>
      </g>
    ),
  },
  {
    k: "ma",
    art: (
      <g>
        <rect x="0" y="0" width="24" height="24" fill="#2f5cf5" />
        <path d="M0 24V8l24 16z" fill="#5a2df0" opacity=".6" />
        <path d="M4 17L9 7M8.500 17l5-10M13 17l5-10v10M15 14h3" stroke="#fff" strokeWidth="1.700" fill="none" />
      </g>
    ),
  },
  {
    k: "epic",
    art: (
      <g>
        <path d="M3 .5h18v19L12 24l-9-4.500z" fill="#0a0a0a" stroke="#3a3a3a" strokeWidth=".6" />
        <text x="5" y="11" fontSize="9.500" fontWeight="700" fill="#fff" textLength="14" lengthAdjust="spacingAndGlyphs" fontFamily={sans}>EPIC</text>
        <text x="5.500" y="16" fontSize="4" fontWeight="700" fill="#fff" textLength="13" lengthAdjust="spacingAndGlyphs" fontFamily={sans}>GAMES</text>
        <path d="M9 19.500h6l-3 1.500z" fill="#fff" />
      </g>
    ),
  },
  {
    k: "battle",
    art: (
      <g>
        <circle cx="12" cy="12" r="11.500" fill="#0a74da" />
        <path d="M10 5v12c5 0 8-3 8-5 0-3-5-4-11-3M10 5c3 1 6 5 5 9M5 13c3 3 7 4 10 1M7 17c-1-1 1-6 5-9" fill="none" stroke="#fff" strokeWidth="1.500" />
      </g>
    ),
  },
  {
    k: "gray",
    art: (
      <g>
        <path d="M12 1l9 5v12l-9 5-9-5V6z" fill="#63686c" />
        <path d="M12 1L5 17l7 6 4-3-3-8z" fill="#a3a8ac" />
        <path d="M13 6l5 9-11 3z" fill="#1f2123" />
      </g>
    ),
  },
  {
    k: "vlc",
    run: true,
    art: (
      <g>
        <path d="M5 17h14l3 6H2z" fill="#f58a1f" />
        <path d="M10 1h4l5 19c-3 2-11 2-14 0z" fill="#f58a1f" />
        <path d="M8.700 6h6.600l1.200 4.500h-9zM6.700 14h10.600l.8 3H5.900z" fill="#f5f5f5" />
      </g>
    ),
  },
  {
    k: "ps",
    art: (
      <g>
        <rect x="2" y="2" width="20" height="20" rx="4" fill="#001e36" />
        <text x="12" y="16" fontSize="11" fontWeight="700" textAnchor="middle" fill="#31a8ff" fontFamily={sans}>Ps</text>
      </g>
    ),
  },
  {
    k: "zotero",
    art: (
      <g>
        <path d="M12 1l9 5v12l-9 5-9-5V6z" fill="#ddd" stroke="#999" />
        <path d="M6.500 5h11v4l-5.500 6h5.500v4h-11v-4L12 9H6.500z" fill="#c21a20" />
      </g>
    ),
  },
  {
    k: "word",
    run: true,
    art: (
      <g>
        <path d="M6 1h17v22H6z" fill="#2b7cd3" />
        <path d="M6 1h17v6H6z" fill="#41a5ee" />
        <path d="M6 17h17v6H6z" fill="#103f91" />
        <rect x="0" y="6" width="12" height="12" fill="#185abd" />
        <text x="6" y="15.500" fontSize="10" fontWeight="700" textAnchor="middle" fill="#fff" fontFamily={sans}>W</text>
      </g>
    ),
  },
  {
    k: "studio",
    art: (
      <g>
        <circle cx="12" cy="12" r="11.500" fill="#fff" />
        <path d="M14 4a9 9 0 014 15l-6-7z" fill="#3ddc84" opacity=".6" />
        <path d="M12 4L6 18M12 4l6 14M6 14c4 2 8 2 12 0" stroke="#3b7be0" strokeWidth="2.200" fill="none" />
      </g>
    ),
  },
  {
    k: "notepad",
    art: (
      <g>
        <path d="M8 2h14l-4 20H2z" fill="#cfe9ec" />
        <path d="M8 3h12l-3 16H4z" fill="#8cc9d0" />
        <path d="M20 5l2 16-3 1z" fill="#777" />
      </g>
    ),
  },
  {
    k: "unity",
    art: (
      <g>
        <path d="M12 1l10 5.500v11L12 23 2 17.500v-11z" fill="#d6d6d6" />
        <path d="M12 6l5 3v6l-5 3-5-3V9zM12 12v6M12 12l5-3M12 12L7 9" fill="none" stroke="#222" strokeWidth="2" />
      </g>
    ),
  },
  {
    k: "idea",
    art: (
      <g>
        <path d="M1 3l10-2 6 6-8 14-6-3z" fill="#fe315d" />
        <path d="M1 3l6-2 3 7-7 6z" fill="#fc9c1e" />
        <path d="M12 1l10 4 1 14-9 5z" fill="#07a3fa" />
        <path d="M2 16l16 2-4 6-8-2z" fill="#e03cb0" />
        <rect x="5" y="4" width="14" height="15" fill="#1a1010" />
        <text x="7" y="11" fontSize="7" fontWeight="700" fill="#fff" fontFamily="Liberation Mono, monospace">IJ</text>
        <path d="M7 16.500h5" stroke="#fff" strokeWidth="1.300" />
      </g>
    ),
  },
  {
    k: "vscode",
    art: (
      <g>
        <path d="M3 18L0 15.500 17.500 0v6.500z" fill="#1177c4" />
        <path d="M3 6L0 8.500 17.500 24v-6.500z" fill="#1b8fe0" />
        <path d="M17 .3l6.500 3v17.400l-6.500 3z" fill="#2aa9f3" />
      </g>
    ),
  },
  {
    k: "postman",
    art: (
      <g>
        <circle cx="12" cy="12" r="11.300" fill="#ff6c37" />
        <path d="M6 18l7-8 3-3.500 2.500 2.500L15 12l-8 6z" fill="#fff" />
      </g>
    ),
  },
  {
    k: "xampp",
    art: (
      <g>
        <rect x=".5" y="0" width="23" height="24" rx="2" fill="#f47a20" />
        <path d="M7 5.500c0 4 0 6.500 5 6.500s5-2.500 5-6.500M7.500 12c-4 0-4.500 6-1 6s2.500-6 5.500-6 2 6 5.500 6 3-6-1-6M7 5.500c3-1 5 1 5 3 0-2 2-4 5-3" fill="none" stroke="#fff" strokeWidth="2.400" strokeLinecap="round" />
      </g>
    ),
  },
  {
    k: "excel",
    art: (
      <g>
        <path d="M6 1h17v22H6z" fill="#21a366" />
        <path d="M6 12h17v11H6z" fill="#107c41" />
        <path d="M15 1h8v6h-8z" fill="#33c481" />
        <rect x="0" y="6" width="12" height="12" fill="#107c41" />
        <text x="6" y="15.500" fontSize="10" fontWeight="700" textAnchor="middle" fill="#fff" fontFamily={sans}>X</text>
      </g>
    ),
  },
  {
    k: "qgis",
    run: true,
    active: true,
    art: (
      <g>
        <path d="M11.500 1a10.500 10.500 0 100 21c2 0 3-.3 4.300-1L13 17.300A5.700 5.700 0 1117 13l3.800 3.800C23.500 10 19 1 11.500 1z" fill="#6ea52f" />
        <path d="M13 13h4l6.500 7v3.500H20L13 17z" fill="#93b023" />
        <path d="M9.500 9.500H14L17 15l-2 1.500-5.500-3z" fill="#ee7913" />
      </g>
    ),
  },
  {
    k: "earth",
    run: true,
    art: (
      <g>
        <circle cx="12" cy="11" r="10.500" fill="#a9b1b9" />
        <path d="M2 8C8 6 14 9 22 15M5 3c7 0 13 3 17 8M2 13c5-1 10 2 14 6" stroke="#f2f4f6" strokeWidth="2.500" fill="none" />
        <path d="M4 15.500h16l-2 7.500H6z" fill="#1a1a1a" />
        <text x="12" y="21.500" fontSize="6.500" letterSpacing="0" textAnchor="middle" fill="#fff" fontFamily={sans}>Pro</text>
      </g>
    ),
  },
];

const TaskBar = () => (
  <div className="flex h-[40px] shrink-0 items-center bg-[#1e1e1e] text-white">
    <div className="flex w-[48px] justify-center">
      <svg width="16" height="16" viewBox="0 0 16 16" fill="#fff">
        <path d="M0 2.300l6.700-1v6.300H0zM7.500 1.200L16 0v7.600H7.500zM0 8.400h6.700v6.300L0 13.700zM7.500 8.400H16V16l-8.500-1.200z" />
      </svg>
    </div>
    <div className="flex w-[48px] justify-center">
      <svg width="23" height="23" viewBox="0 0 23 23" fill="none" stroke="#fff" strokeWidth="2">
        <circle cx="13.500" cy="9" r="7.500" />
        <path d="M8.500 15L1.500 22" />
      </svg>
    </div>
    <div className="flex w-[48px] justify-center">
      <svg width="16" height="16" viewBox="0 0 16 16" fill="none" stroke="#fff" strokeWidth="1.200">
        <path d="M.6 0v3h10V0M.6 16v-3h10v3M.6 5.500h10v5H.6zM14 0v4M14 8v8" />
        <path d="M13 5h2.500v2H13z" fill="#fff" stroke="none" />
      </svg>
    </div>
    <div className="ml-[3px] flex">
      {APPS.map((a) => (
        <div key={a.k} className={`flex h-[40px] w-[48.960px] flex-col items-center ${a.active ? "bg-[#4a4a4a]" : ""}`}>
          <div className="flex h-[38px] items-center pt-[2px]">
            <svg width="24" height="24" viewBox="0 0 24 24" className="overflow-visible">
              {a.art}
            </svg>
          </div>
          {a.run && <div className={`h-[2px] bg-[#5b9cc0] ${a.active ? "w-full" : "w-[40px]"}`} />}
        </div>
      ))}
    </div>
    <div className="ml-auto flex items-center text-[14.500px] tracking-[-0.35px]">
      <svg width="25" height="24" viewBox="0 0 25 24">
        <path d="M10 1c5 1 9 5 7 11L5 9c4 1 7-3 5-8z" fill="#f0a32c" />
        <path d="M1 10l6-3 4 4z" fill="#f07d2c" />
        <path d="M6 23c-7 0-7-8-1-8 1-6 10-7 12-1 8-1 9 9 2 9z" fill="#b9d6f7" stroke="#8db6ec" />
      </svg>
      <span className="ml-[7px] w-[36px]">80°F</span>
      <span className="w-[107px] whitespace-nowrap">Mostly cloudy</span>
    </div>
    <div className="flex w-[133px] items-center">
      <svg width="133" height="20" viewBox="0 0 133 20" fill="none" stroke="#fff" strokeWidth="1.200">
        <path d="M1 13l5.500-5.500L12 13" />
        <path d="M25 5.500h9v9h-9zM34 8.500l3-1.500v6l-3-1.500M26 3c2-1.500 5-1.500 7 0M26 17.500c2 1.500 5 1.500 7 0" />
        <rect x="51" y="1.500" width="6" height="11" rx="1.500" fill="#fff" />
        <path d="M49 9c0 8 10 8 10 0M54 15v3M51 18.500h6" />
        <path d="M75.500 6.500h12v7.500H79M88 8.500v3.500M71 9.500h5M72 6v2.500M75 6v2.500M71.500 9.500c0 3 4.500 3 4.500 0M74 12v3h2" />
        <path d="M79.500 8.500h5v4h-5z" fill="#fff" stroke="none" />
        <path d="M95 8h2.500l4-3.500v11l-4-3.500H95zM103.500 8c1 1.500 1 3 0 4.500M105.500 6.500c2 2 2 5 0 7.500" />
        <path d="M107.500 5c3 3 3 7 0 10.500" stroke="#777" />
        <path d="M123.500 6.500H132.500v8H121v-4M118.500 4.500h4v4h-4zM126.500 14.500v3M122.500 17.500h7" />
      </svg>
    </div>
    <div className="ml-[8px] flex w-[62px] flex-col items-center text-[12px] leading-[18px] tracking-[-0.2px]">
      <span>10:13 PM</span>
      <span>8/13/2023</span>
    </div>
    <svg className="ml-[14px] mr-[21px]" width="16" height="17" viewBox="0 0 16 17" fill="none" stroke="#fff" strokeWidth="1.200">
      <path d="M.6 1h14.800v11.500H10L8 15.500 6 12.500H.6z" />
    </svg>
    <div className="mr-[3px] h-[40px] w-px bg-[#666]" />
  </div>
);

export default function App() {
  return (
    <div className="relative flex h-[1080px] w-[1920px] flex-col overflow-hidden bg-[#efefef] font-['Open_Sans','Noto_Sans',sans-serif] text-[12px] leading-[15px] tracking-[-0.3px] text-black">
      <TitleBar />
      <MenuBar />
      <Toolbars />
      <div className="flex h-[891px] shrink-0">
        <LeftDock />
        <div className="ml-[6px] h-[891px] w-[1316px] shrink-0 border border-[#b4b4b4]">
          <MapCanvas />
        </div>
        <RightDock />
      </div>
      <StatusBar />
      <TaskBar />
      <Dialog />
    </div>
  );
}
